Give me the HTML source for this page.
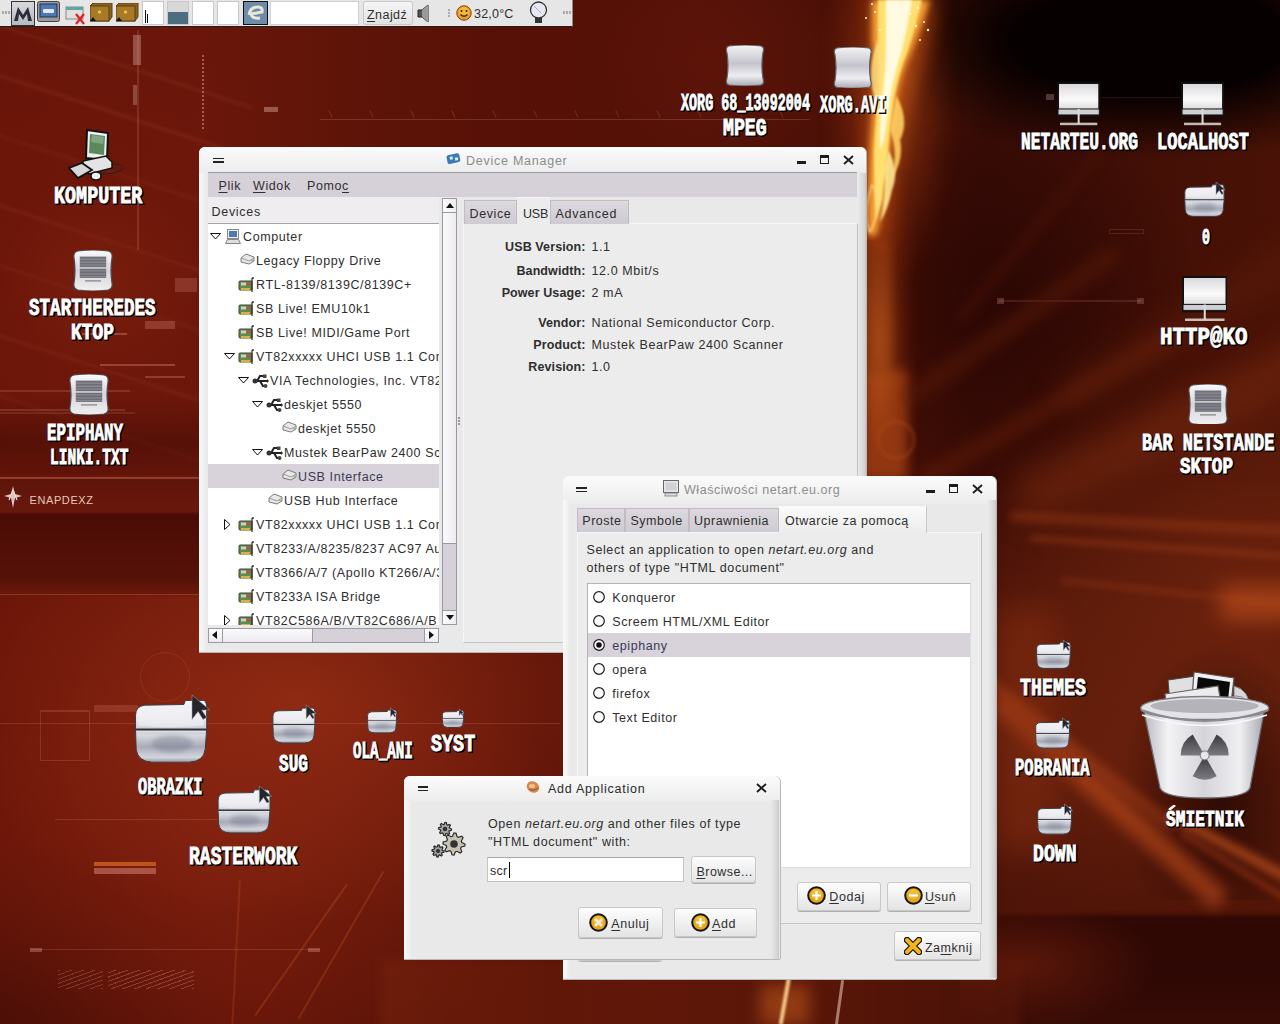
<!DOCTYPE html>
<html><head><meta charset="utf-8">
<style>
*{box-sizing:border-box;margin:0;padding:0}
html,body{width:1280px;height:1024px;overflow:hidden}
body{position:relative;font-family:"Liberation Sans",sans-serif;font-size:12.5px;color:#1e1e1e;background:#5a1208}
.a{position:absolute}
.t{position:absolute;white-space:nowrap}
.win{position:absolute;background:#e9e9e9;border-radius:6px 6px 0 0;box-shadow:0 1px 0 #b4b8bc,1px 0 0 #b8b8b8;overflow:hidden}
.tbar{position:absolute;left:0;top:0;right:0;height:24px;background:linear-gradient(#fbfbfb,#ececec)}
.btn{position:absolute;border:1px solid #c4c4c4;border-radius:3px;background:linear-gradient(#fbfbfb,#e6e6e6);box-shadow:0 1px 0 #b8b8b8}
.u{text-decoration:underline;text-underline-offset:2px}
</style></head><body>

<div class="a" id="bg" style="left:0;top:0;width:1280px;height:1024px;overflow:hidden;background:#4a0e06">
<div class="a" style="left:0px;top:0px;width:1280px;height:1024px;opacity:1;background:radial-gradient(300px 120px at 1150px 40px,rgba(6,0,0,1) 45%,rgba(6,0,0,0) 100%),radial-gradient(60px 80px at 960px 60px,rgba(90,24,8,.6) 0%,rgba(90,24,8,0) 100%),radial-gradient(120px 100px at 720px 60px,rgba(100,22,10,.5) 0%,rgba(100,22,10,0) 100%),radial-gradient(200px 200px at 1000px 300px,rgba(40,6,3,.8) 0%,rgba(40,6,3,0) 100%),radial-gradient(300px 260px at 1250px 620px,rgba(150,56,22,.55) 0%,rgba(150,56,22,0) 100%),radial-gradient(260px 180px at 1100px 760px,rgba(130,44,18,.5) 0%,rgba(130,44,18,0) 100%),radial-gradient(380px 220px at 300px 700px,rgba(156,48,22,.75) 0%,rgba(156,48,22,0) 100%),radial-gradient(340px 200px at 250px 860px,rgba(136,36,16,.6) 0%,rgba(136,36,16,0) 100%),radial-gradient(260px 180px at 0px 1024px,rgba(70,14,6,.8) 0%,rgba(70,14,6,0) 100%),radial-gradient(260px 300px at 80px 300px,rgba(116,26,12,.6) 0%,rgba(116,26,12,0) 100%),linear-gradient(90deg,#681408 0px,#6a160a 200px,#5e1408 360px,#561006 540px,#561208 700px,#4a1006 860px,#3a0c06 980px,#4a1206 1280px);"></div>
<div class="a" style="left:-40px;top:60px;width:300px;height:3px;filter:blur(1.5px);transform:rotate(18deg);opacity:1;background:rgba(220,110,80,0.1);"></div>
<div class="a" style="left:-40px;top:110px;width:300px;height:3px;filter:blur(1.5px);transform:rotate(18deg);opacity:1;background:rgba(220,110,80,0.12);"></div>
<div class="a" style="left:-40px;top:170px;width:300px;height:3px;filter:blur(1.5px);transform:rotate(18deg);opacity:1;background:rgba(220,110,80,0.08);"></div>
<div class="a" style="left:-40px;top:240px;width:300px;height:3px;filter:blur(1.5px);transform:rotate(18deg);opacity:1;background:rgba(220,110,80,0.1);"></div>
<div class="a" style="left:-40px;top:300px;width:300px;height:3px;filter:blur(1.5px);transform:rotate(18deg);opacity:1;background:rgba(220,110,80,0.07);"></div>
<div class="a" style="left:-40px;top:370px;width:300px;height:3px;filter:blur(1.5px);transform:rotate(18deg);opacity:1;background:rgba(220,110,80,0.09);"></div>
<div class="a" style="left:-40px;top:430px;width:300px;height:3px;filter:blur(1.5px);transform:rotate(18deg);opacity:1;background:rgba(220,110,80,0.08);"></div>
<div class="a" style="left:0px;top:180px;width:205px;height:200px;opacity:1;background:radial-gradient(ellipse at 50% 50%,rgba(130,36,16,.45),rgba(130,36,16,0) 70%);"></div>
<div class="a" style="left:0px;top:395px;width:205px;height:80px;opacity:1;background:linear-gradient(rgba(60,10,4,0),rgba(60,10,4,.45) 60%,rgba(60,10,4,.2));"></div>
<div class="a" style="left:82px;top:333px;width:45px;height:2px;opacity:1;background:rgba(230,150,130,.35);"></div>
<div class="a" style="left:100px;top:364px;width:75px;height:2px;opacity:1;background:rgba(230,150,130,.35);"></div>
<div class="a" style="left:145px;top:376px;width:40px;height:2px;opacity:1;background:rgba(230,150,130,.3);"></div>
<div class="a" style="left:0px;top:390px;width:130px;height:1.5px;opacity:1;background:rgba(230,150,130,.2);"></div>
<div class="a" style="left:0px;top:409px;width:125px;height:1.5px;opacity:1;background:rgba(230,150,130,.2);"></div>
<div class="a" style="left:0px;top:412px;width:135px;height:1.5px;opacity:1;background:rgba(230,150,130,.15);"></div>
<div class="a" style="left:175px;top:278px;width:22px;height:14px;opacity:1;background:rgba(220,140,130,.25);"></div>
<div class="a" style="left:145px;top:321px;width:30px;height:8px;opacity:1;background:rgba(220,140,130,.3);"></div>
<div class="a" style="left:-10px;top:478px;width:215px;height:36px;filter:blur(0.6px);opacity:1;background:linear-gradient(#5e140a,#6a180c);"></div>
<div class="a" style="left:-10px;top:477px;width:215px;height:1.5px;opacity:1;background:rgba(200,110,90,.45);"></div>
<div class="a" style="left:-10px;top:513px;width:215px;height:82px;filter:blur(1px);opacity:1;background:linear-gradient(#4a0c06,#561208 80%,#6a1a0a);"></div>
<div class="a" style="left:0px;top:594px;width:205px;height:1px;opacity:1;background:rgba(200,110,90,.35);"></div>
<div class="a" style="left:320px;top:119px;width:490px;height:1px;opacity:1;background:rgba(230,170,160,0.2);"></div>
<div class="a" style="left:330px;top:110px;width:1px;height:8px;transform:rotate(-25deg);opacity:1;background:rgba(230,170,160,0.2);"></div>
<div class="a" style="left:371px;top:110px;width:1px;height:8px;transform:rotate(-25deg);opacity:1;background:rgba(230,170,160,0.2);"></div>
<div class="a" style="left:412px;top:110px;width:1px;height:8px;transform:rotate(-25deg);opacity:1;background:rgba(230,170,160,0.2);"></div>
<div class="a" style="left:453px;top:110px;width:1px;height:8px;transform:rotate(-25deg);opacity:1;background:rgba(230,170,160,0.2);"></div>
<div class="a" style="left:494px;top:110px;width:1px;height:8px;transform:rotate(-25deg);opacity:1;background:rgba(230,170,160,0.2);"></div>
<div class="a" style="left:535px;top:110px;width:1px;height:8px;transform:rotate(-25deg);opacity:1;background:rgba(230,170,160,0.2);"></div>
<div class="a" style="left:576px;top:110px;width:1px;height:8px;transform:rotate(-25deg);opacity:1;background:rgba(230,170,160,0.2);"></div>
<div class="a" style="left:617px;top:110px;width:1px;height:8px;transform:rotate(-25deg);opacity:1;background:rgba(230,170,160,0.2);"></div>
<div class="a" style="left:658px;top:110px;width:1px;height:8px;transform:rotate(-25deg);opacity:1;background:rgba(230,170,160,0.2);"></div>
<div class="a" style="left:699px;top:110px;width:1px;height:8px;transform:rotate(-25deg);opacity:1;background:rgba(230,170,160,0.2);"></div>
<div class="a" style="left:740px;top:110px;width:1px;height:8px;transform:rotate(-25deg);opacity:1;background:rgba(230,170,160,0.2);"></div>
<div class="a" style="left:781px;top:110px;width:1px;height:8px;transform:rotate(-25deg);opacity:1;background:rgba(230,170,160,0.2);"></div>
<div class="a" style="left:137px;top:30px;width:1.5px;height:220px;opacity:1;background:rgba(220,140,120,0.2);"></div>
<div class="a" style="left:202px;top:55px;width:2px;height:75px;opacity:0.5;background:repeating-linear-gradient(#d8a8a0 0 2px,rgba(0,0,0,0) 2px 4px);"></div>
<div class="a" style="left:133px;top:35px;width:8px;height:30px;opacity:1;background:rgba(230,190,180,.35);"></div>
<div class="a" style="left:133px;top:85px;width:4px;height:20px;opacity:1;background:rgba(230,190,180,.3);"></div>
<div class="a" style="left:264px;top:107px;width:14px;height:5px;opacity:1;background:rgba(230,190,180,.4);"></div>
<div class="a" style="left:0px;top:723px;width:560px;height:1px;opacity:1;background:rgba(230,150,130,0.2);"></div>
<div class="a" style="left:40px;top:710px;width:50px;height:1px;opacity:1;background:rgba(230,150,130,0.2);"></div>
<div class="a" style="left:40px;top:711px;width:50px;height:50px;opacity:1;border:1px solid rgba(230,150,130,0.2);background:none;"></div>
<div class="a" style="left:140px;top:652px;width:50px;height:50px;opacity:1;border:1px solid rgba(230,150,130,0.13);border-radius:50%;background:none;"></div>
<div class="a" style="left:55px;top:819px;width:200px;height:1px;opacity:1;background:rgba(230,150,130,0.2);"></div>
<div class="a" style="left:30px;top:949px;width:290px;height:1px;opacity:1;background:rgba(230,150,130,0.2);"></div>
<div class="a" style="left:30px;top:948px;width:12px;height:4px;opacity:1;background:rgba(230,160,150,.35);"></div>
<div class="a" style="left:308px;top:948px;width:12px;height:4px;opacity:1;background:rgba(230,160,150,.35);"></div>
<div class="a" style="left:94px;top:862px;width:62px;height:4px;opacity:1;background:rgba(220,110,30,.7);"></div>
<div class="a" style="left:94px;top:868px;width:62px;height:6px;opacity:1;background:rgba(230,150,140,.45);"></div>
<div class="a" style="left:58px;top:970px;width:45px;height:19px;opacity:1;background:repeating-linear-gradient(-20deg,rgba(230,150,140,.25) 0 1px,rgba(0,0,0,0) 1px 4px);"></div>
<div class="a" style="left:108px;top:970px;width:86px;height:19px;opacity:1;background:repeating-linear-gradient(-20deg,rgba(230,150,140,.3) 0 1px,rgba(0,0,0,0) 1px 4px);"></div>
<div class="a" style="left:300px;top:870px;width:2px;height:160px;filter:blur(0.5px);transform:rotate(35deg);opacity:1;background:rgba(210,90,40,.28);"></div>
<div class="a" style="left:340px;top:860px;width:2px;height:170px;filter:blur(0.5px);transform:rotate(30deg);opacity:1;background:rgba(210,90,40,.25);"></div>
<div class="a" style="left:235px;top:880px;width:2px;height:150px;filter:blur(0.5px);transform:rotate(3deg);opacity:1;background:rgba(210,90,40,.22);"></div>
<div class="a" style="left:94px;top:705px;width:44px;height:7px;opacity:1;background:rgba(230,150,130,0.2);"></div>
<div class="a" style="left:1046px;top:94px;width:8px;height:6px;opacity:1;background:rgba(200,150,150,.35);"></div>
<div class="a" style="left:1102px;top:97px;width:78px;height:1px;opacity:1;background:rgba(60,30,30,.6);"></div>
<div class="a" style="left:1109px;top:229px;width:35px;height:5px;opacity:1;border:1px solid rgba(200,120,110,.2);background:none;"></div>
<div class="a" style="left:999px;top:300px;width:142px;height:1.5px;opacity:1;background:rgba(200,120,110,.18);"></div>
<div class="a" style="left:997px;top:298px;width:7px;height:6px;opacity:1;background:rgba(200,140,130,.3);"></div>
<div class="a" style="left:1137px;top:298px;width:7px;height:6px;opacity:1;background:rgba(200,140,130,.3);"></div>
<svg class="a" style="left:1232.0px;top:968.0px;" width="26" height="30" viewBox="0 0 26 30"><path d="M13 1 L13 29 M9 29 L17 29 M6 18 Q13 26 20 18 M8 12 L18 12 M10 7 L16 7" stroke="rgba(220,200,200,.45)" stroke-width="1.5" fill="none"/></svg>
<div class="a" style="left:996px;top:480px;width:300px;height:440px;filter:blur(6px);opacity:1;background:linear-gradient(180deg,rgba(90,26,10,0) 0%,rgba(100,30,12,.6) 30%,rgba(100,30,12,.6) 60%,rgba(90,26,10,.5) 100%);"></div>
<div class="a" style="left:1120px;top:640px;width:200px;height:260px;opacity:1;background:radial-gradient(ellipse at 50% 60%,rgba(30,4,2,.75),rgba(30,4,2,0) 70%);"></div>
<div class="a" style="left:996px;top:915px;width:300px;height:120px;filter:blur(2px);opacity:1;background:linear-gradient(#300804,#2e0804 50%,#3a0c06);"></div>
<div class="a" style="left:960px;top:900px;width:200px;height:130px;opacity:1;background:radial-gradient(ellipse at 30% 50%,rgba(110,30,12,.7),rgba(110,30,12,0) 70%);"></div>
<div class="a" style="left:1000px;top:395px;width:380px;height:46px;filter:blur(16px);transform:rotate(-26deg);opacity:0.55;background:#7a2a0e;"></div>
<div class="a" style="left:1040px;top:300px;width:320px;height:34px;filter:blur(14px);transform:rotate(-32deg);opacity:0.5;background:#5e1e0a;"></div>
<div class="a" style="left:1010px;top:520px;width:300px;height:8px;filter:blur(4px);transform:rotate(3deg);opacity:0.5;background:#a04018;"></div>
<div class="a" style="left:1030px;top:545px;width:280px;height:6px;filter:blur(3px);transform:rotate(4deg);opacity:0.45;background:#a04018;"></div>
<div class="a" style="left:1060px;top:590px;width:240px;height:6px;filter:blur(3px);transform:rotate(6deg);opacity:0.35;background:#a04018;"></div>
<div class="a" style="left:1220px;top:585px;width:100px;height:36px;filter:blur(10px);opacity:0.6;background:#c0501c;"></div>
<div class="a" style="left:960px;top:790px;width:300px;height:22px;filter:blur(7px);transform:rotate(42deg);opacity:0.65;background:#b8481a;"></div>
<div class="a" style="left:940px;top:740px;width:260px;height:12px;filter:blur(5px);transform:rotate(38deg);opacity:0.5;background:#a8401a;"></div>
<div class="a" style="left:1160px;top:850px;width:170px;height:10px;filter:blur(4px);transform:rotate(28deg);opacity:0.75;background:#c0501c;"></div>
<div class="a" style="left:1170px;top:870px;width:150px;height:6px;filter:blur(3px);transform:rotate(32deg);opacity:0.5;background:#b0401a;"></div>
<div class="a" style="left:996px;top:610px;width:60px;height:240px;filter:blur(14px);opacity:0.45;background:#8a3010;"></div>
<div class="a" style="left:380px;top:960px;width:640px;height:80px;filter:blur(4px);opacity:1;background:linear-gradient(90deg,rgba(120,36,14,.5),rgba(100,28,10,.55) 50%,rgba(90,24,10,.5));"></div>
<div class="a" style="left:760px;top:985px;width:50px;height:40px;filter:blur(8px);opacity:0.5;background:#c86020;"></div>
<div class="a" style="left:783px;top:975px;width:4px;height:50px;filter:blur(1px);transform:rotate(10deg);opacity:0.9;background:#ffd890;"></div>
<div class="a" style="left:838px;top:980px;width:3px;height:45px;filter:blur(0.5px);transform:rotate(8deg);opacity:0.6;background:#e0c0b0;"></div>
<div class="a" style="left:862px;top:240px;width:30px;height:130px;filter:blur(5px);opacity:0.6;background:#8a3812;"></div>
<div class="a" style="left:862px;top:370px;width:45px;height:110px;filter:blur(6px);opacity:0.7;background:#b04a18;"></div>
<div class="a" style="left:876px;top:420px;width:40px;height:40px;filter:blur(1.5px);opacity:1;border:4px solid rgba(200,90,30,.25);border-radius:50%;background:none;"></div>
<div class="a" style="left:880px;top:320px;width:260px;height:14px;filter:blur(8px);transform:rotate(-35deg);opacity:0.7;background:#5a1a08;"></div>
<div class="a" style="left:900px;top:400px;width:300px;height:14px;filter:blur(8px);transform:rotate(-30deg);opacity:0.6;background:#6a2008;"></div>
<div class="a" style="left:920px;top:230px;width:220px;height:10px;filter:blur(6px);transform:rotate(-50deg);opacity:0.6;background:#4a1206;"></div>
<div class="a" style="left:830px;top:-40px;width:120px;height:320px;filter:blur(8px);opacity:1;background:radial-gradient(ellipse at 50% 40%,rgba(255,140,40,.45) 0%,rgba(210,80,20,.25) 40%,rgba(120,30,5,0) 75%);"></div>
<div class="a" style="left:850px;top:180px;width:60px;height:320px;filter:blur(6px);opacity:1;background:radial-gradient(ellipse at 50% 50%,rgba(210,100,30,.6) 0%,rgba(150,50,10,.3) 50%,rgba(90,20,5,0) 100%);"></div>
</div>
<svg class="a" style="left:800.0px;top:0.0px;overflow:visible" width="180" height="480" viewBox="0 0 180 480"><defs><filter id="fb" x="-50%" y="-50%" width="200%" height="200%"><feGaussianBlur stdDeviation="9"/></filter><filter id="fb1" x="-50%" y="-50%" width="200%" height="200%"><feGaussianBlur stdDeviation="3"/></filter><filter id="fb2" x="-50%" y="-50%" width="200%" height="200%"><feGaussianBlur stdDeviation="1.2"/></filter></defs>
<path d="M70 0 L135 0 Q125 60 105 110 Q92 160 88 240 L66 240 Q62 170 72 110 Q80 60 70 0Z" fill="#d85a18" filter="url(#fb)" opacity=".55"/>
<path d="M72 0 L130 0 Q122 25 112 50 Q100 75 96 100 Q92 125 90 150 Q86 180 84 200 L76 236 L68 236 Q68 200 70 150 Q72 120 74 100 Q76 70 72 40Z" fill="#ffa838" filter="url(#fb1)" opacity=".95"/>
<path d="M78 0 L122 0 Q116 25 108 50 Q98 75 94 100 Q90 125 88 150 Q84 180 82 200 L76 220 Q74 190 74 150 Q76 120 78 100 Q80 70 78 40Z" fill="#ffe070" filter="url(#fb2)"/>
<path d="M86 0 L112 0 Q108 25 102 50 Q94 75 90 100 Q86 125 84 140 L80 150 Q80 120 82 100 Q86 70 86 40Z" fill="#fffae0" filter="url(#fb2)"/>
<path d="M96 95 Q110 120 100 140 Q104 160 92 178 Q98 150 90 130Z" fill="#ffd060" filter="url(#fb2)" opacity=".9"/>
<path d="M78 40 Q66 70 74 95 Q72 110 80 120 Q78 90 84 70Z" fill="#ffe080" filter="url(#fb2)" opacity=".8"/>
<path d="M88 150 Q100 170 92 190 Q88 210 80 222 Q86 195 84 170Z" fill="#ffe890" filter="url(#fb2)" opacity=".9"/>
<path d="M72 185 Q62 215 70 232 Q80 215 76 190Z" fill="none" stroke="#ffe0a0" stroke-width="1.2" filter="url(#fb2)" opacity=".9"/>
<g fill="#fff4d0"><circle cx="110" cy="14" r="1.2"/><circle cx="116" cy="26" r="1.3"/><circle cx="106" cy="4" r="1"/><circle cx="72" cy="4" r="1"/><circle cx="66" cy="18" r="1"/><circle cx="118" cy="8" r="1.2"/><circle cx="124" cy="22" r="1"/><circle cx="128" cy="30" r="1.2"/><circle cx="75" cy="12" r="1"/><circle cx="80" cy="30" r="1"/><circle cx="120" cy="40" r="1"/></g></svg>
<div class="a" style="left:0.0px;top:0.0px;width:573.0px;height:27.0px;background:#e6e6e6;border-bottom:1px solid #1e1e1e;border-right:1px solid #8a8a8a"></div>
<div class="a" style="left:2.0px;top:11.0px;width:1.5px;height:3.0px;background:#aaa"></div>
<div class="a" style="left:5.0px;top:11.0px;width:1.5px;height:3.0px;background:#aaa"></div>
<div class="a" style="left:8.0px;top:11.0px;width:1.5px;height:3.0px;background:#aaa"></div>
<div class="a" style="left:11.0px;top:1.0px;width:24.0px;height:25.0px;background:linear-gradient(#d8d8dc,#b8b8c0);border:1px solid #333"></div>
<svg class="a" style="left:13.0px;top:5.0px;" width="20" height="17" viewBox="0 0 20 17"><path d="M1 16 L5 2 L10 10 L15 2 L19 16 L15 16 L14 9 L10 15 L6 9 L5 16Z" fill="#2a2e3a"/></svg>
<svg class="a" style="left:37.0px;top:1.0px;" width="24" height="22" viewBox="0 0 24 22"><rect x="0.5" y="0.5" width="22" height="20" rx="2" fill="#9a9a9a" stroke="#444"/><rect x="3" y="3" width="17" height="13" fill="#4a78b8" stroke="#234"/><rect x="6" y="8" width="11" height="4" rx="1" fill="#e8e8e8"/></svg>
<svg class="a" style="left:64.0px;top:4.0px;" width="24" height="21" viewBox="0 0 24 21"><rect x="2" y="3" width="17" height="12" fill="#e0e0e0" stroke="#888"/><rect x="2" y="3" width="17" height="3" fill="#5aa8a0"/><path d="M12 10 L20 20 M20 10 L12 20" stroke="#e02020" stroke-width="2.2"/></svg>
<svg class="a" style="left:90.0px;top:3.0px;" width="23" height="20" viewBox="0 0 23 20"><path d="M3 0 L22 0 L22 14 L19 18 L0 18 L0 3Z" fill="#8a6420" stroke="#5a3e10"/><rect x="0" y="3" width="19" height="15" fill="#a87a28" stroke="#5a3e10"/><circle cx="9.5" cy="9" r="1.6" fill="#f4d040"/><path d="M0 18 L3 14 L6 18Z" fill="#111"/></svg>
<svg class="a" style="left:116.0px;top:3.0px;" width="23" height="20" viewBox="0 0 23 20"><path d="M3 0 L22 0 L22 14 L19 18 L0 18 L0 3Z" fill="#8a6420" stroke="#5a3e10"/><rect x="0" y="3" width="19" height="15" fill="#a87a28" stroke="#5a3e10"/><circle cx="9.5" cy="9" r="1.6" fill="#f4d040"/><path d="M0 18 L3 14 L6 18Z" fill="#111"/></svg>
<div class="a" style="left:142.0px;top:1.0px;width:22.0px;height:24.0px;background:#fff;border:1px solid #c8c8c8"></div>
<div class="a" style="left:145.0px;top:10.0px;width:1.0px;height:13.0px;background:#111"></div>
<div class="a" style="left:147.0px;top:14.0px;width:1.0px;height:9.0px;background:#111"></div>
<div class="a" style="left:167.0px;top:1.0px;width:22.0px;height:24.0px;background:linear-gradient(#d8d8d8 0,#d8d8d8 45%,#4c6e80 45%);border:1px solid #c8c8c8"></div>
<div class="a" style="left:192.0px;top:1.0px;width:22.0px;height:24.0px;background:#fff;border:1px solid #c8c8c8"></div>
<div class="a" style="left:217.0px;top:1.0px;width:22.0px;height:24.0px;background:#fff;border:1px solid #c8c8c8"></div>
<svg class="a" style="left:243.0px;top:1.0px;" width="25" height="24" viewBox="0 0 25 24"><rect x="0.5" y="0.5" width="24" height="23" fill="#6c8ca8" stroke="#111"/><path d="M6 14 Q7 6 15 6 Q20 6 19 11 L8 13 Q9 18 17 17" fill="none" stroke="#eae6da" stroke-width="3"/></svg>
<div class="a" style="left:270.0px;top:1.0px;width:89.0px;height:24.0px;background:#fff;border:1px solid #d0d0d0"></div>
<div class="a" style="left:362.5px;top:1.0px;width:50.0px;height:24.0px;background:linear-gradient(#f6f6f6,#e2e2e2);border:1px solid #c8c8c8;border-radius:3px"></div>
<div class="t" style="left:367.0px;top:7.7px;font-size:12.5px;line-height:15.0px;color:#2e2e2e;letter-spacing:0.45px;font-weight:normal;font-style:normal;"><span class="u">Z</span>najdź</div>
<svg class="a" style="left:417.0px;top:4.0px;" width="15" height="19" viewBox="0 0 15 19"><path d="M1 6 L5 6 L11 1 L11 18 L5 13 L1 13Z" fill="#555" stroke="#222"/><path d="M5 6 L11 1 L11 18 L5 13Z" fill="#9a9a9a"/></svg>
<div class="a" style="left:448.0px;top:9.0px;width:2.0px;height:1.5px;background:#aaa"></div>
<div class="a" style="left:448.0px;top:12.0px;width:2.0px;height:1.5px;background:#aaa"></div>
<div class="a" style="left:448.0px;top:15.0px;width:2.0px;height:1.5px;background:#aaa"></div>
<svg class="a" style="left:456.0px;top:5.0px;" width="16" height="16" viewBox="0 0 16 16"><circle cx="8" cy="8" r="7.2" fill="#f0a020" stroke="#8a3a00"/><circle cx="8" cy="7" r="5" fill="#f8c040" opacity=".7"/><circle cx="5.5" cy="6" r="1" fill="#222"/><circle cx="10.5" cy="6" r="1" fill="#222"/><path d="M4.5 9.5 Q8 13 11.5 9.5" stroke="#222" fill="none" stroke-width="1.2"/></svg>
<div class="t" style="left:474.0px;top:7.2px;font-size:12.5px;line-height:15.0px;color:#2e2e2e;letter-spacing:0.2px;font-weight:normal;font-style:normal;">32,0°C</div>
<svg class="a" style="left:529.0px;top:1.0px;" width="20" height="24" viewBox="0 0 20 24"><circle cx="9.5" cy="9" r="8" fill="#e8e8f4" stroke="#333" stroke-width="1.3"/><path d="M5 5 L12 12" stroke="#aab" /><rect x="6" y="17" width="7" height="5" fill="#333"/></svg>
<div class="a" style="left:563.0px;top:11.0px;width:1.5px;height:3.0px;background:#aaa"></div>
<div class="a" style="left:566.0px;top:11.0px;width:1.5px;height:3.0px;background:#aaa"></div>
<div class="a" style="left:569.0px;top:11.0px;width:1.5px;height:3.0px;background:#aaa"></div>
<svg width="0" height="0" style="position:absolute"><defs>
<linearGradient id="gs" x1="0" y1="0" x2="0" y2="1"><stop offset="0" stop-color="#f4f4f6"/><stop offset=".45" stop-color="#c4c4cc"/><stop offset=".75" stop-color="#eeeef2"/><stop offset="1" stop-color="#a8a8b0"/></linearGradient>
<linearGradient id="gs2" x1="0" y1="0" x2="0" y2="1"><stop offset="0" stop-color="#fafafa"/><stop offset=".5" stop-color="#d6d6dc"/><stop offset="1" stop-color="#f0f0f2"/></linearGradient>
<linearGradient id="gpot" x1="0" y1="0" x2="0" y2="1"><stop offset="0" stop-color="#f6f6f8"/><stop offset=".35" stop-color="#d8d8de"/><stop offset=".5" stop-color="#8a8a94"/><stop offset=".56" stop-color="#e8e8ec"/><stop offset=".8" stop-color="#a4a4ae"/><stop offset="1" stop-color="#e4e4e8"/></linearGradient>
<linearGradient id="gmon" x1="0" y1="0" x2="0" y2="1"><stop offset="0" stop-color="#d8d8dc"/><stop offset=".5" stop-color="#fafafa"/><stop offset="1" stop-color="#c8c8cc"/></linearGradient>
<linearGradient id="gpot2" x1="0" y1="0" x2="0" y2="1"><stop offset="0" stop-color="#f8f8fa"/><stop offset=".3" stop-color="#e4e4ea"/><stop offset=".5" stop-color="#c8cad2"/><stop offset=".56" stop-color="#d8dae0"/><stop offset=".75" stop-color="#a8abb8"/><stop offset=".92" stop-color="#d4d6de"/><stop offset="1" stop-color="#9a9ca6"/></linearGradient>
<filter id="pb" x="-50%" y="-50%" width="200%" height="200%"><feGaussianBlur stdDeviation="2"/></filter>
</defs></svg>
<svg class="a" style="left:66.0px;top:128.0px;" width="64" height="54" viewBox="0 0 64 54"><path d="M21 2 L42 5 L41 32 L20 30Z" fill="#f0f0f0" stroke="#111" stroke-width="2"/><path d="M24 6 L39 8 L38 27 L23 25Z" fill="#5a8a5c"/><path d="M26 7 L38 9 L37 16 L25 14Z" fill="#9aba9a" opacity=".6"/><path d="M17 33 L40 28 L46 34 L46 40 L23 46 L17 40Z" fill="#e4e4e4" stroke="#111" stroke-width="1.5"/><path d="M3 40 L16 35 L26 42 L12 50Z" fill="#d8d8d8" stroke="#111" stroke-width="1.8"/><ellipse cx="30" cy="48" rx="5" ry="4" fill="#eee" stroke="#111" stroke-width="1.5"/><path d="M46 36 Q60 36 56 42 Q48 46 40 46 Q34 46 33 44" fill="none" stroke="#222" stroke-width="1"/></svg>
<svg class="a" style="left:52.0px;top:182.8px;overflow:visible" width="94.4" height="23.7"><text x="2" y="19.7" font-family="Liberation Mono" font-weight="bold" font-size="23.8" textLength="88.4" lengthAdjust="spacingAndGlyphs" fill="#000" transform="translate(1,1)" stroke="#000" stroke-width="2">KOMPUTER</text><text x="2" y="19.7" font-family="Liberation Mono" font-weight="bold" font-size="23.8" textLength="88.4" lengthAdjust="spacingAndGlyphs" fill="#fff" stroke="#fff" stroke-width="0.9">KOMPUTER</text></svg>
<svg class="a" style="left:73.0px;top:249.6px;" width="40" height="41.00000000000003" viewBox="0 0 40 41.00000000000003"><path d="M5 1 Q20.0 -1 35 1 Q40 2 39 8 Q37 20.500000000000014 39 33.00000000000003 Q40 39.00000000000003 35 40.00000000000003 Q20.0 42.00000000000003 5 40.00000000000003 Q0 39.00000000000003 1 33.00000000000003 Q3 20.500000000000014 1 8 Q0 2 5 1Z" fill="url(#gs2)" stroke="#4a4a52" stroke-width="1.2"/><rect x="6.8" y="6.6" width="26.4" height="1.5" fill="#5a5a64" opacity=".85"/><rect x="6.8" y="8.1" width="26.4" height="1.5" fill="#5a5a64" opacity=".85"/><rect x="6.8" y="9.6" width="26.4" height="1.5" fill="#5a5a64" opacity=".85"/><rect x="6.8" y="11.1" width="26.4" height="1.5" fill="#5a5a64" opacity=".85"/><rect x="6.8" y="12.7" width="26.4" height="1.5" fill="#5a5a64" opacity=".85"/><rect x="6.8" y="14.2" width="26.4" height="1.5" fill="#5a5a64" opacity=".85"/><rect x="6.8" y="15.7" width="26.4" height="1.5" fill="#5a5a64" opacity=".85"/><rect x="6.8" y="18.7" width="26.4" height="1.5" fill="#5a5a64" opacity=".85"/><rect x="6.8" y="20.3" width="26.4" height="1.5" fill="#5a5a64" opacity=".85"/><rect x="6.8" y="21.8" width="26.4" height="1.5" fill="#5a5a64" opacity=".85"/><rect x="6.8" y="23.3" width="26.4" height="1.5" fill="#5a5a64" opacity=".85"/><rect x="6.8" y="24.8" width="26.4" height="1.5" fill="#5a5a64" opacity=".85"/><rect x="6.8" y="26.4" width="26.4" height="1.5" fill="#5a5a64" opacity=".85"/><rect x="12.0" y="30.3" width="16.0" height="1.2" fill="#555" opacity=".7"/></svg>
<svg class="a" style="left:26.8px;top:294.8px;overflow:visible" width="132.6" height="23.6"><text x="2" y="19.6" font-family="Liberation Mono" font-weight="bold" font-size="23.6" textLength="126.6" lengthAdjust="spacingAndGlyphs" fill="#000" transform="translate(1,1)" stroke="#000" stroke-width="2">STARTHEREDES</text><text x="2" y="19.6" font-family="Liberation Mono" font-weight="bold" font-size="23.6" textLength="126.6" lengthAdjust="spacingAndGlyphs" fill="#fff" stroke="#fff" stroke-width="0.9">STARTHEREDES</text></svg>
<svg class="a" style="left:68.6px;top:320.2px;overflow:visible" width="48.9" height="22.8"><text x="2" y="18.8" font-family="Liberation Mono" font-weight="bold" font-size="22.4" textLength="42.9" lengthAdjust="spacingAndGlyphs" fill="#000" transform="translate(1,1)" stroke="#000" stroke-width="2">KTOP</text><text x="2" y="18.8" font-family="Liberation Mono" font-weight="bold" font-size="22.4" textLength="42.9" lengthAdjust="spacingAndGlyphs" fill="#fff" stroke="#fff" stroke-width="0.9">KTOP</text></svg>
<svg class="a" style="left:69.0px;top:374.0px;" width="40" height="41" viewBox="0 0 40 41"><path d="M5 1 Q20.0 -1 35 1 Q40 2 39 8 Q37 20.5 39 33 Q40 39 35 40 Q20.0 42 5 40 Q0 39 1 33 Q3 20.5 1 8 Q0 2 5 1Z" fill="url(#gs2)" stroke="#4a4a52" stroke-width="1.2"/><rect x="6.8" y="6.6" width="26.4" height="1.5" fill="#5a5a64" opacity=".85"/><rect x="6.8" y="8.1" width="26.4" height="1.5" fill="#5a5a64" opacity=".85"/><rect x="6.8" y="9.6" width="26.4" height="1.5" fill="#5a5a64" opacity=".85"/><rect x="6.8" y="11.1" width="26.4" height="1.5" fill="#5a5a64" opacity=".85"/><rect x="6.8" y="12.7" width="26.4" height="1.5" fill="#5a5a64" opacity=".85"/><rect x="6.8" y="14.2" width="26.4" height="1.5" fill="#5a5a64" opacity=".85"/><rect x="6.8" y="15.7" width="26.4" height="1.5" fill="#5a5a64" opacity=".85"/><rect x="6.8" y="18.7" width="26.4" height="1.5" fill="#5a5a64" opacity=".85"/><rect x="6.8" y="20.3" width="26.4" height="1.5" fill="#5a5a64" opacity=".85"/><rect x="6.8" y="21.8" width="26.4" height="1.5" fill="#5a5a64" opacity=".85"/><rect x="6.8" y="23.3" width="26.4" height="1.5" fill="#5a5a64" opacity=".85"/><rect x="6.8" y="24.8" width="26.4" height="1.5" fill="#5a5a64" opacity=".85"/><rect x="6.8" y="26.4" width="26.4" height="1.5" fill="#5a5a64" opacity=".85"/><rect x="12.0" y="30.3" width="16.0" height="1.2" fill="#555" opacity=".7"/></svg>
<svg class="a" style="left:45.3px;top:419.8px;overflow:visible" width="82.1" height="23.8"><text x="2" y="19.8" font-family="Liberation Mono" font-weight="bold" font-size="23.9" textLength="76.1" lengthAdjust="spacingAndGlyphs" fill="#000" transform="translate(1,1)" stroke="#000" stroke-width="2">EPIPHANY</text><text x="2" y="19.8" font-family="Liberation Mono" font-weight="bold" font-size="23.9" textLength="76.1" lengthAdjust="spacingAndGlyphs" fill="#fff" stroke="#fff" stroke-width="0.9">EPIPHANY</text></svg>
<svg class="a" style="left:47.5px;top:445.2px;overflow:visible" width="84.5" height="23.0"><text x="2" y="19.0" font-family="Liberation Mono" font-weight="bold" font-size="22.7" textLength="78.5" lengthAdjust="spacingAndGlyphs" fill="#000" transform="translate(1,1)" stroke="#000" stroke-width="2">LINKI.TXT</text><text x="2" y="19.0" font-family="Liberation Mono" font-weight="bold" font-size="22.7" textLength="78.5" lengthAdjust="spacingAndGlyphs" fill="#fff" stroke="#fff" stroke-width="0.9">LINKI.TXT</text></svg>
<svg class="a" style="left:2.0px;top:485.0px;" width="22" height="24" viewBox="0 0 22 24"><path d="M11 1 L13 9 L20 11 L13 13 L11 23 L9 13 L2 11 L9 9Z" fill="#e8d8d0" opacity=".9"/><path d="M11 5 L15 15 M11 5 L7 15" stroke="#e8d8d0" stroke-width="1.2"/></svg>
<div class="t" style="left:29.5px;top:493.6px;font-size:11px;line-height:13.2px;color:#e8c8b8;letter-spacing:0.6px;font-weight:normal;font-style:normal;">ENAPDEXZ</div>
<svg class="a" style="left:725.3px;top:44.7px;" width="39.90000000000009" height="41.0" viewBox="0 0 39.90000000000009 41.0"><path d="M4 1 Q19.950000000000045 -1 35.90000000000009 1 Q39.90000000000009 2 37.90000000000009 8 Q35.90000000000009 20.5 37.90000000000009 33.0 Q39.90000000000009 39.0 35.90000000000009 40.0 Q19.950000000000045 42.0 4 40.0 Q0 39.0 2 33.0 Q4 20.5 2 8 Q0 2 4 1Z" fill="url(#gs)" stroke="#606068" stroke-width="1.2"/></svg>
<svg class="a" style="left:678.8px;top:90.7px;overflow:visible" width="135.0" height="23.3"><text x="2" y="19.3" font-family="Liberation Mono" font-weight="bold" font-size="23.2" textLength="129.0" lengthAdjust="spacingAndGlyphs" fill="#000" transform="translate(1,1)" stroke="#000" stroke-width="2">XORG 68_13092004</text><text x="2" y="19.3" font-family="Liberation Mono" font-weight="bold" font-size="23.2" textLength="129.0" lengthAdjust="spacingAndGlyphs" fill="#fff" stroke="#fff" stroke-width="0.9">XORG 68_13092004</text></svg>
<svg class="a" style="left:721.0px;top:115.8px;overflow:visible" width="49.7" height="23.3"><text x="2" y="19.3" font-family="Liberation Mono" font-weight="bold" font-size="23.2" textLength="43.7" lengthAdjust="spacingAndGlyphs" fill="#000" transform="translate(1,1)" stroke="#000" stroke-width="2">MPEG</text><text x="2" y="19.3" font-family="Liberation Mono" font-weight="bold" font-size="23.2" textLength="43.7" lengthAdjust="spacingAndGlyphs" fill="#fff" stroke="#fff" stroke-width="0.9">MPEG</text></svg>
<svg class="a" style="left:832.6px;top:46.5px;" width="39.60000000000002" height="41.400000000000006" viewBox="0 0 39.60000000000002 41.400000000000006"><path d="M4 1 Q19.80000000000001 -1 35.60000000000002 1 Q39.60000000000002 2 37.60000000000002 8 Q35.60000000000002 20.700000000000003 37.60000000000002 33.400000000000006 Q39.60000000000002 39.400000000000006 35.60000000000002 40.400000000000006 Q19.80000000000001 42.400000000000006 4 40.400000000000006 Q0 39.400000000000006 2 33.400000000000006 Q4 20.700000000000003 2 8 Q0 2 4 1Z" fill="url(#gs)" stroke="#606068" stroke-width="1.2"/></svg>
<svg class="a" style="left:818.0px;top:93.4px;overflow:visible" width="71.6" height="23.3"><text x="2" y="19.3" font-family="Liberation Mono" font-weight="bold" font-size="23.2" textLength="65.6" lengthAdjust="spacingAndGlyphs" fill="#000" transform="translate(1,1)" stroke="#000" stroke-width="2">XORG.AVI</text><text x="2" y="19.3" font-family="Liberation Mono" font-weight="bold" font-size="23.2" textLength="65.6" lengthAdjust="spacingAndGlyphs" fill="#fff" stroke="#fff" stroke-width="0.9">XORG.AVI</text></svg>
<svg class="a" style="left:1057.3px;top:81.9px;" width="43.299999999999955" height="43.69999999999999" viewBox="0 0 43.299999999999955 43.69999999999999"><rect x="1" y="1" width="41.299999999999955" height="32.959999999999994" fill="url(#gmon)" stroke="#111" stroke-width="2"/><rect x="1" y="26.959999999999994" width="41.299999999999955" height="6" fill="#cfcfd4" stroke="#111"/><rect x="20.649999999999977" y="26.959999999999994" width="2" height="14.739999999999995" fill="#ddd"/><rect x="3" y="40.69999999999999" width="37.299999999999955" height="2.5" fill="#e8e8e8" opacity=".8"/></svg>
<svg class="a" style="left:1018.8px;top:128.6px;overflow:visible" width="123.0" height="24.0"><text x="2" y="20.0" font-family="Liberation Mono" font-weight="bold" font-size="24.2" textLength="117.0" lengthAdjust="spacingAndGlyphs" fill="#000" transform="translate(1,1)" stroke="#000" stroke-width="2">NETARTEU.ORG</text><text x="2" y="20.0" font-family="Liberation Mono" font-weight="bold" font-size="24.2" textLength="117.0" lengthAdjust="spacingAndGlyphs" fill="#fff" stroke="#fff" stroke-width="0.9">NETARTEU.ORG</text></svg>
<svg class="a" style="left:1180.5px;top:81.9px;" width="43.09999999999991" height="43.69999999999999" viewBox="0 0 43.09999999999991 43.69999999999999"><rect x="1" y="1" width="41.09999999999991" height="32.959999999999994" fill="url(#gmon)" stroke="#111" stroke-width="2"/><rect x="1" y="26.959999999999994" width="41.09999999999991" height="6" fill="#cfcfd4" stroke="#111"/><rect x="20.549999999999955" y="26.959999999999994" width="2" height="14.739999999999995" fill="#ddd"/><rect x="3" y="40.69999999999999" width="37.09999999999991" height="2.5" fill="#e8e8e8" opacity=".8"/></svg>
<svg class="a" style="left:1155.0px;top:128.6px;overflow:visible" width="98.0" height="24.0"><text x="2" y="20.0" font-family="Liberation Mono" font-weight="bold" font-size="24.2" textLength="92.0" lengthAdjust="spacingAndGlyphs" fill="#000" transform="translate(1,1)" stroke="#000" stroke-width="2">LOCALHOST</text><text x="2" y="20.0" font-family="Liberation Mono" font-weight="bold" font-size="24.2" textLength="92.0" lengthAdjust="spacingAndGlyphs" fill="#fff" stroke="#fff" stroke-width="0.9">LOCALHOST</text></svg>
<svg class="a" style="left:1184.0px;top:182.0px;overflow:visible" width="40.5" height="35" viewBox="0 0 40.5 35"><path d="M0.8 17.5 L0.8 10.5 Q0.8 5.6 6.1 5.2 L27.5 4.9 L28.3 2.8 L38.5 2.8 Q40.1 3.1 40.1 7.0 L40.1 17.5 L39.3 28.0 Q38.5 34.3 30.4 34.6 L10.1 34.6 Q2.0 34.3 1.2 28.0 Z" fill="url(#gpot2)" stroke="#3c3c44" stroke-width="1"/><path d="M2.0 7.7 Q20.2 5.6 38.5 7.7 L38.5 15.8 Q20.2 17.5 2.0 15.8Z" fill="#f4f4f8" opacity=".55"/><ellipse cx="21.1" cy="25.2" rx="11.3" ry="4.5" fill="#6a6e80" opacity=".35" filter="url(#pb)"/><path d="M0.8 17.9 L40.1 17.9" stroke="#34343c" stroke-width="1.1"/><path d="M1.2 18.9 L39.7 18.9" stroke="#f4f4f8" stroke-width="1" opacity=".7"/><path d="M32.0 0.0 L32.0 12.6 L35.1 8.6 L37.7 12.6 L39.6 11.6 L37.0 7.8 L41.1 7.6Z" fill="#26262a" stroke="#a8a8b0" stroke-width=".5"/></svg>
<svg class="a" style="left:1200.0px;top:225.0px;overflow:visible" width="14.0" height="23.0"><text x="2" y="19.0" font-family="Liberation Mono" font-weight="bold" font-size="22.7" textLength="8.0" lengthAdjust="spacingAndGlyphs" fill="#000" transform="translate(1,1)" stroke="#000" stroke-width="2">0</text><text x="2" y="19.0" font-family="Liberation Mono" font-weight="bold" font-size="22.7" textLength="8.0" lengthAdjust="spacingAndGlyphs" fill="#fff" stroke="#fff" stroke-width="0.9">0</text></svg>
<svg class="a" style="left:1181.5px;top:276.0px;" width="45.5" height="45.5" viewBox="0 0 45.5 45.5"><rect x="1" y="1" width="43.5" height="34.4" fill="url(#gmon)" stroke="#111" stroke-width="2"/><rect x="1" y="28.4" width="43.5" height="6" fill="#cfcfd4" stroke="#111"/><rect x="21.75" y="28.4" width="2" height="15.100000000000001" fill="#ddd"/><rect x="3" y="42.5" width="39.5" height="2.5" fill="#e8e8e8" opacity=".8"/></svg>
<svg class="a" style="left:1158.0px;top:323.6px;overflow:visible" width="93.6" height="24.4"><text x="2" y="20.4" font-family="Liberation Mono" font-weight="bold" font-size="24.8" textLength="87.6" lengthAdjust="spacingAndGlyphs" fill="#000" transform="translate(1,1)" stroke="#000" stroke-width="2">HTTP@KO</text><text x="2" y="20.4" font-family="Liberation Mono" font-weight="bold" font-size="24.8" textLength="87.6" lengthAdjust="spacingAndGlyphs" fill="#fff" stroke="#fff" stroke-width="0.9">HTTP@KO</text></svg>
<svg class="a" style="left:1187.6px;top:383.6px;" width="40.0" height="40.89999999999998" viewBox="0 0 40.0 40.89999999999998"><path d="M5 1 Q20.0 -1 35.0 1 Q40.0 2 39.0 8 Q37.0 20.44999999999999 39.0 32.89999999999998 Q40.0 38.89999999999998 35.0 39.89999999999998 Q20.0 41.89999999999998 5 39.89999999999998 Q0 38.89999999999998 1 32.89999999999998 Q3 20.44999999999999 1 8 Q0 2 5 1Z" fill="url(#gs2)" stroke="#4a4a52" stroke-width="1.2"/><rect x="6.8" y="6.5" width="26.4" height="1.5" fill="#5a5a64" opacity=".85"/><rect x="6.8" y="8.1" width="26.4" height="1.5" fill="#5a5a64" opacity=".85"/><rect x="6.8" y="9.6" width="26.4" height="1.5" fill="#5a5a64" opacity=".85"/><rect x="6.8" y="11.1" width="26.4" height="1.5" fill="#5a5a64" opacity=".85"/><rect x="6.8" y="12.6" width="26.4" height="1.5" fill="#5a5a64" opacity=".85"/><rect x="6.8" y="14.1" width="26.4" height="1.5" fill="#5a5a64" opacity=".85"/><rect x="6.8" y="15.7" width="26.4" height="1.5" fill="#5a5a64" opacity=".85"/><rect x="6.8" y="18.7" width="26.4" height="1.5" fill="#5a5a64" opacity=".85"/><rect x="6.8" y="20.2" width="26.4" height="1.5" fill="#5a5a64" opacity=".85"/><rect x="6.8" y="21.7" width="26.4" height="1.5" fill="#5a5a64" opacity=".85"/><rect x="6.8" y="23.3" width="26.4" height="1.5" fill="#5a5a64" opacity=".85"/><rect x="6.8" y="24.8" width="26.4" height="1.5" fill="#5a5a64" opacity=".85"/><rect x="6.8" y="26.3" width="26.4" height="1.5" fill="#5a5a64" opacity=".85"/><rect x="12.0" y="30.3" width="16.0" height="1.2" fill="#555" opacity=".7"/></svg>
<svg class="a" style="left:1139.5px;top:429.6px;overflow:visible" width="138.5" height="23.8"><text x="2" y="19.8" font-family="Liberation Mono" font-weight="bold" font-size="23.9" textLength="132.5" lengthAdjust="spacingAndGlyphs" fill="#000" transform="translate(1,1)" stroke="#000" stroke-width="2">BAR NETSTANDE</text><text x="2" y="19.8" font-family="Liberation Mono" font-weight="bold" font-size="23.9" textLength="132.5" lengthAdjust="spacingAndGlyphs" fill="#fff" stroke="#fff" stroke-width="0.9">BAR NETSTANDE</text></svg>
<svg class="a" style="left:1178.0px;top:453.9px;overflow:visible" width="59.0" height="23.1"><text x="2" y="19.1" font-family="Liberation Mono" font-weight="bold" font-size="22.9" textLength="53.0" lengthAdjust="spacingAndGlyphs" fill="#000" transform="translate(1,1)" stroke="#000" stroke-width="2">SKTOP</text><text x="2" y="19.1" font-family="Liberation Mono" font-weight="bold" font-size="22.9" textLength="53.0" lengthAdjust="spacingAndGlyphs" fill="#fff" stroke="#fff" stroke-width="0.9">SKTOP</text></svg>
<svg class="a" style="left:133.9px;top:694.5px;overflow:visible" width="73.4" height="67.89999999999998" viewBox="0 0 73.4 67.89999999999998"><path d="M1.5 33.9 L1.5 20.4 Q1.5 10.9 11.0 10.2 L49.9 9.5 L51.4 5.4 L69.7 5.4 Q72.7 6.1 72.7 13.6 L72.7 33.9 L71.2 54.3 Q69.7 66.5 55.1 67.2 L18.4 67.2 Q3.7 66.5 2.2 54.3 Z" fill="url(#gpot2)" stroke="#3c3c44" stroke-width="1"/><path d="M3.7 14.9 Q36.7 10.9 69.7 14.9 L69.7 30.6 Q36.7 33.9 3.7 30.6Z" fill="#f4f4f8" opacity=".55"/><ellipse cx="38.2" cy="48.9" rx="20.6" ry="8.8" fill="#6a6e80" opacity=".35" filter="url(#pb)"/><path d="M1.5 34.6 L72.7 34.6" stroke="#34343c" stroke-width="2.0"/><path d="M2.2 36.7 L71.9 36.7" stroke="#f4f4f8" stroke-width="1" opacity=".7"/><path d="M58.0 0.0 L58.0 24.4 L64.1 16.6 L69.0 24.4 L72.7 22.5 L67.8 15.2 L75.6 14.7Z" fill="#26262a" stroke="#a8a8b0" stroke-width=".5"/></svg>
<svg class="a" style="left:135.9px;top:774.9px;overflow:visible" width="70.5" height="23.3"><text x="2" y="19.3" font-family="Liberation Mono" font-weight="bold" font-size="23.2" textLength="64.5" lengthAdjust="spacingAndGlyphs" fill="#000" transform="translate(1,1)" stroke="#000" stroke-width="2">OBRAZKI</text><text x="2" y="19.3" font-family="Liberation Mono" font-weight="bold" font-size="23.2" textLength="64.5" lengthAdjust="spacingAndGlyphs" fill="#fff" stroke="#fff" stroke-width="0.9">OBRAZKI</text></svg>
<svg class="a" style="left:271.8px;top:704.6px;overflow:visible" width="43.30000000000001" height="38.39999999999998" viewBox="0 0 43.30000000000001 38.39999999999998"><path d="M0.9 19.2 L0.9 11.5 Q0.9 6.1 6.5 5.8 L29.4 5.4 L30.3 3.1 L41.1 3.1 Q42.9 3.5 42.9 7.7 L42.9 19.2 L42.0 30.7 Q41.1 37.6 32.5 38.0 L10.8 38.0 Q2.2 37.6 1.3 30.7 Z" fill="url(#gpot2)" stroke="#3c3c44" stroke-width="1"/><path d="M2.2 8.4 Q21.7 6.1 41.1 8.4 L41.1 17.3 Q21.7 19.2 2.2 17.3Z" fill="#f4f4f8" opacity=".55"/><ellipse cx="22.5" cy="27.6" rx="12.1" ry="5.0" fill="#6a6e80" opacity=".35" filter="url(#pb)"/><path d="M0.9 19.6 L42.9 19.6" stroke="#34343c" stroke-width="1.2"/><path d="M1.3 20.7 L42.4 20.7" stroke="#f4f4f8" stroke-width="1" opacity=".7"/><path d="M34.2 0.0 L34.2 13.8 L37.7 9.4 L40.4 13.8 L42.5 12.7 L39.7 8.6 L44.2 8.3Z" fill="#26262a" stroke="#a8a8b0" stroke-width=".5"/></svg>
<svg class="a" style="left:277.0px;top:750.6px;overflow:visible" width="35.0" height="23.6"><text x="2" y="19.6" font-family="Liberation Mono" font-weight="bold" font-size="23.6" textLength="29.0" lengthAdjust="spacingAndGlyphs" fill="#000" transform="translate(1,1)" stroke="#000" stroke-width="2">SUG</text><text x="2" y="19.6" font-family="Liberation Mono" font-weight="bold" font-size="23.6" textLength="29.0" lengthAdjust="spacingAndGlyphs" fill="#fff" stroke="#fff" stroke-width="0.9">SUG</text></svg>
<svg class="a" style="left:367.2px;top:708.3px;overflow:visible" width="29.80000000000001" height="25.200000000000045" viewBox="0 0 29.80000000000001 25.200000000000045"><path d="M0.6 12.6 L0.6 7.6 Q0.6 4.0 4.5 3.8 L20.3 3.5 L20.9 2.0 L28.3 2.0 Q29.5 2.3 29.5 5.0 L29.5 12.6 L28.9 20.2 Q28.3 24.7 22.4 24.9 L7.5 24.9 Q1.5 24.7 0.9 20.2 Z" fill="url(#gpot2)" stroke="#3c3c44" stroke-width="1"/><path d="M1.5 5.5 Q14.9 4.0 28.3 5.5 L28.3 11.3 Q14.9 12.6 1.5 11.3Z" fill="#f4f4f8" opacity=".55"/><ellipse cx="15.5" cy="18.1" rx="8.3" ry="3.3" fill="#6a6e80" opacity=".35" filter="url(#pb)"/><path d="M0.6 12.9 L29.5 12.9" stroke="#34343c" stroke-width="1.0"/><path d="M0.9 13.6 L29.2 13.6" stroke="#f4f4f8" stroke-width="1" opacity=".7"/><path d="M23.5 0.0 L23.5 9.1 L25.8 6.2 L27.6 9.1 L29.0 8.3 L27.2 5.6 L30.1 5.4Z" fill="#26262a" stroke="#a8a8b0" stroke-width=".5"/></svg>
<svg class="a" style="left:350.7px;top:738.2px;overflow:visible" width="65.9" height="24.4"><text x="2" y="20.4" font-family="Liberation Mono" font-weight="bold" font-size="24.8" textLength="59.9" lengthAdjust="spacingAndGlyphs" fill="#000" transform="translate(1,1)" stroke="#000" stroke-width="2">OLA_ANI</text><text x="2" y="20.4" font-family="Liberation Mono" font-weight="bold" font-size="24.8" textLength="59.9" lengthAdjust="spacingAndGlyphs" fill="#fff" stroke="#fff" stroke-width="0.9">OLA_ANI</text></svg>
<svg class="a" style="left:442.3px;top:709.0px;overflow:visible" width="21.69999999999999" height="18.700000000000045" viewBox="0 0 21.69999999999999 18.700000000000045"><path d="M0.4 9.4 L0.4 5.6 Q0.4 3.0 3.3 2.8 L14.8 2.6 L15.2 1.5 L20.6 1.5 Q21.5 1.7 21.5 3.7 L21.5 9.4 L21.0 15.0 Q20.6 18.3 16.3 18.5 L5.4 18.5 Q1.1 18.3 0.7 15.0 Z" fill="url(#gpot2)" stroke="#3c3c44" stroke-width="1"/><path d="M1.1 4.1 Q10.8 3.0 20.6 4.1 L20.6 8.4 Q10.8 9.4 1.1 8.4Z" fill="#f4f4f8" opacity=".55"/><ellipse cx="11.3" cy="13.5" rx="6.1" ry="2.4" fill="#6a6e80" opacity=".35" filter="url(#pb)"/><path d="M0.4 9.5 L21.5 9.5" stroke="#34343c" stroke-width="1.0"/><path d="M0.7 10.1 L21.3 10.1" stroke="#f4f4f8" stroke-width="1" opacity=".7"/><path d="M17.1 0.0 L17.1 6.7 L18.8 4.6 L20.2 6.7 L21.2 6.2 L19.8 4.2 L22.0 4.0Z" fill="#26262a" stroke="#a8a8b0" stroke-width=".5"/></svg>
<svg class="a" style="left:428.8px;top:731.5px;overflow:visible" width="50.2" height="23.3"><text x="2" y="19.3" font-family="Liberation Mono" font-weight="bold" font-size="23.2" textLength="44.2" lengthAdjust="spacingAndGlyphs" fill="#000" transform="translate(1,1)" stroke="#000" stroke-width="2">SYST</text><text x="2" y="19.3" font-family="Liberation Mono" font-weight="bold" font-size="23.2" textLength="44.2" lengthAdjust="spacingAndGlyphs" fill="#fff" stroke="#fff" stroke-width="0.9">SYST</text></svg>
<svg class="a" style="left:216.8px;top:786.4px;overflow:visible" width="53.5" height="47.39999999999998" viewBox="0 0 53.5 47.39999999999998"><path d="M1.1 23.7 L1.1 14.2 Q1.1 7.6 8.0 7.1 L36.4 6.6 L37.4 3.8 L50.8 3.8 Q53.0 4.3 53.0 9.5 L53.0 23.7 L51.9 37.9 Q50.8 46.5 40.1 46.9 L13.4 46.9 Q2.7 46.5 1.6 37.9 Z" fill="url(#gpot2)" stroke="#3c3c44" stroke-width="1"/><path d="M2.7 10.4 Q26.8 7.6 50.8 10.4 L50.8 21.3 Q26.8 23.7 2.7 21.3Z" fill="#f4f4f8" opacity=".55"/><ellipse cx="27.8" cy="34.1" rx="15.0" ry="6.2" fill="#6a6e80" opacity=".35" filter="url(#pb)"/><path d="M1.1 24.2 L53.0 24.2" stroke="#34343c" stroke-width="1.4"/><path d="M1.6 25.6 L52.4 25.6" stroke="#f4f4f8" stroke-width="1" opacity=".7"/><path d="M42.3 0.0 L42.3 17.1 L46.5 11.6 L49.9 17.1 L52.5 15.7 L49.1 10.6 L54.6 10.2Z" fill="#26262a" stroke="#a8a8b0" stroke-width=".5"/></svg>
<svg class="a" style="left:187.4px;top:843.1px;overflow:visible" width="114.4" height="24.5"><text x="2" y="20.5" font-family="Liberation Mono" font-weight="bold" font-size="25.0" textLength="108.4" lengthAdjust="spacingAndGlyphs" fill="#000" transform="translate(1,1)" stroke="#000" stroke-width="2">RASTERWORK</text><text x="2" y="20.5" font-family="Liberation Mono" font-weight="bold" font-size="25.0" textLength="108.4" lengthAdjust="spacingAndGlyphs" fill="#fff" stroke="#fff" stroke-width="0.9">RASTERWORK</text></svg>
<svg class="a" style="left:1036.0px;top:639.8px;overflow:visible" width="34.59999999999991" height="28.90000000000009" viewBox="0 0 34.59999999999991 28.90000000000009"><path d="M0.7 14.5 L0.7 8.7 Q0.7 4.6 5.2 4.3 L23.5 4.0 L24.2 2.3 L32.9 2.3 Q34.3 2.6 34.3 5.8 L34.3 14.5 L33.6 23.1 Q32.9 28.3 25.9 28.6 L8.6 28.6 Q1.7 28.3 1.0 23.1 Z" fill="url(#gpot2)" stroke="#3c3c44" stroke-width="1"/><path d="M1.7 6.4 Q17.3 4.6 32.9 6.4 L32.9 13.0 Q17.3 14.5 1.7 13.0Z" fill="#f4f4f8" opacity=".55"/><ellipse cx="18.0" cy="20.8" rx="9.7" ry="3.8" fill="#6a6e80" opacity=".35" filter="url(#pb)"/><path d="M0.7 14.7 L34.3 14.7" stroke="#34343c" stroke-width="1.0"/><path d="M1.0 15.6 L33.9 15.6" stroke="#f4f4f8" stroke-width="1" opacity=".7"/><path d="M27.3 0.0 L27.3 10.4 L29.9 7.1 L32.0 10.4 L33.6 9.6 L31.5 6.5 L34.8 6.2Z" fill="#26262a" stroke="#a8a8b0" stroke-width=".5"/></svg>
<svg class="a" style="left:1018.3px;top:675.7px;overflow:visible" width="72.0" height="23.2"><text x="2" y="19.2" font-family="Liberation Mono" font-weight="bold" font-size="23.0" textLength="66.0" lengthAdjust="spacingAndGlyphs" fill="#000" transform="translate(1,1)" stroke="#000" stroke-width="2">THEMES</text><text x="2" y="19.2" font-family="Liberation Mono" font-weight="bold" font-size="23.0" textLength="66.0" lengthAdjust="spacingAndGlyphs" fill="#fff" stroke="#fff" stroke-width="0.9">THEMES</text></svg>
<svg class="a" style="left:1035.0px;top:717.7px;overflow:visible" width="34.799999999999955" height="30.5" viewBox="0 0 34.799999999999955 30.5"><path d="M0.7 15.2 L0.7 9.2 Q0.7 4.9 5.2 4.6 L23.7 4.3 L24.4 2.4 L33.1 2.4 Q34.5 2.7 34.5 6.1 L34.5 15.2 L33.8 24.4 Q33.1 29.9 26.1 30.2 L8.7 30.2 Q1.7 29.9 1.0 24.4 Z" fill="url(#gpot2)" stroke="#3c3c44" stroke-width="1"/><path d="M1.7 6.7 Q17.4 4.9 33.1 6.7 L33.1 13.7 Q17.4 15.2 1.7 13.7Z" fill="#f4f4f8" opacity=".55"/><ellipse cx="18.1" cy="22.0" rx="9.7" ry="4.0" fill="#6a6e80" opacity=".35" filter="url(#pb)"/><path d="M0.7 15.6 L34.5 15.6" stroke="#34343c" stroke-width="1.0"/><path d="M1.0 16.5 L34.1 16.5" stroke="#f4f4f8" stroke-width="1" opacity=".7"/><path d="M27.5 0.0 L27.5 11.0 L30.2 7.5 L32.4 11.0 L34.1 10.1 L31.9 6.8 L35.4 6.6Z" fill="#26262a" stroke="#a8a8b0" stroke-width=".5"/></svg>
<svg class="a" style="left:1012.7px;top:755.1px;overflow:visible" width="80.7" height="24.3"><text x="2" y="20.3" font-family="Liberation Mono" font-weight="bold" font-size="24.7" textLength="74.7" lengthAdjust="spacingAndGlyphs" fill="#000" transform="translate(1,1)" stroke="#000" stroke-width="2">POBRANIA</text><text x="2" y="20.3" font-family="Liberation Mono" font-weight="bold" font-size="24.7" textLength="74.7" lengthAdjust="spacingAndGlyphs" fill="#fff" stroke="#fff" stroke-width="0.9">POBRANIA</text></svg>
<svg class="a" style="left:1036.8px;top:804.0px;overflow:visible" width="34.799999999999955" height="30.5" viewBox="0 0 34.799999999999955 30.5"><path d="M0.7 15.2 L0.7 9.2 Q0.7 4.9 5.2 4.6 L23.7 4.3 L24.4 2.4 L33.1 2.4 Q34.5 2.7 34.5 6.1 L34.5 15.2 L33.8 24.4 Q33.1 29.9 26.1 30.2 L8.7 30.2 Q1.7 29.9 1.0 24.4 Z" fill="url(#gpot2)" stroke="#3c3c44" stroke-width="1"/><path d="M1.7 6.7 Q17.4 4.9 33.1 6.7 L33.1 13.7 Q17.4 15.2 1.7 13.7Z" fill="#f4f4f8" opacity=".55"/><ellipse cx="18.1" cy="22.0" rx="9.7" ry="4.0" fill="#6a6e80" opacity=".35" filter="url(#pb)"/><path d="M0.7 15.6 L34.5 15.6" stroke="#34343c" stroke-width="1.0"/><path d="M1.0 16.5 L34.1 16.5" stroke="#f4f4f8" stroke-width="1" opacity=".7"/><path d="M27.5 0.0 L27.5 11.0 L30.2 7.5 L32.4 11.0 L34.1 10.1 L31.9 6.8 L35.4 6.6Z" fill="#26262a" stroke="#a8a8b0" stroke-width=".5"/></svg>
<svg class="a" style="left:1030.5px;top:840.7px;overflow:visible" width="49.7" height="24.0"><text x="2" y="20.0" font-family="Liberation Mono" font-weight="bold" font-size="24.2" textLength="43.7" lengthAdjust="spacingAndGlyphs" fill="#000" transform="translate(1,1)" stroke="#000" stroke-width="2">DOWN</text><text x="2" y="20.0" font-family="Liberation Mono" font-weight="bold" font-size="24.2" textLength="43.7" lengthAdjust="spacingAndGlyphs" fill="#fff" stroke="#fff" stroke-width="0.9">DOWN</text></svg>
<svg class="a" style="left:1138.0px;top:660.0px;" width="134" height="142" viewBox="0 0 134 142"><defs><linearGradient id="gbk" x1="0" y1="0" x2="1" y2="0"><stop offset="0" stop-color="#b8b8c0"/><stop offset=".2" stop-color="#f4f4f6"/><stop offset=".5" stop-color="#d4d4da"/><stop offset=".8" stop-color="#f0f0f2"/><stop offset="1" stop-color="#a8a8b0"/></linearGradient>
<linearGradient id="grad2" x1="0" y1="0" x2="0" y2="1"><stop offset="0" stop-color="#3a3a3e"/><stop offset="1" stop-color="#7a7a80"/></linearGradient></defs>
<path d="M30 20 L58 16 L60 40 L32 44Z" fill="#e0e0e0" stroke="#444" stroke-width="1"/>
<path d="M56 12 L96 18 L93 44 L54 38Z" fill="#f0f0f0" stroke="#555" stroke-width="1.2"/><path d="M60 17 L92 22 L90 40 L58 35Z" fill="#0a0a0a"/>
<path d="M96 26 Q112 30 112 50 L96 52Z" fill="#d8d8dc" stroke="#777"/>
<circle cx="98" cy="52" r="16" fill="#e8e8ea" stroke="#888"/><circle cx="98" cy="52" r="4" fill="#aaa"/>
<path d="M27 34 L80 26 L86 60 L32 66Z" fill="#ececee" stroke="#666" stroke-width="1.2"/><circle cx="58" cy="48" r="11" fill="#d0d0d4" stroke="#888"/><path d="M52 54 L54 42 L58 50 L62 42 L64 54" stroke="#555" stroke-width="2.5" fill="none"/>
<path d="M6 52 L126 52 L112 128 Q108 138 67 138 Q26 138 22 128Z" fill="url(#gbk)" stroke="#6a6a72" stroke-width="1.3"/>
<ellipse cx="66.7" cy="48" rx="64" ry="11.5" fill="#e4e4e8" stroke="#7a7a82" stroke-width="1.3"/>
<ellipse cx="66.7" cy="46" rx="54" ry="7" fill="#5a5a60" opacity=".35"/>
<path d="M3 50 Q66.7 72 130.5 50" fill="none" stroke="#8a8a92" stroke-width="2"/>
<path d="M4 55 Q66.7 76 129 55" fill="none" stroke="#f8f8fa" stroke-width="1.5"/>
<path d="M66.7 95.4 L42.7 95.4 A24 24 0 0 1 54.7 74.6Z" fill="url(#grad2)"/><path d="M66.7 95.4 L78.7 74.6 A24 24 0 0 1 90.7 95.4Z" fill="url(#grad2)"/><path d="M66.7 95.4 L78.7 116.2 A24 24 0 0 1 54.7 116.2Z" fill="url(#grad2)"/><circle cx="66.7" cy="95.4" r="4.5" fill="#e8e8ea" stroke="#777"/></svg>
<svg class="a" style="left:1164.0px;top:807.7px;overflow:visible" width="84.0" height="22.0"><text x="2" y="18.0" font-family="Liberation Mono" font-weight="bold" font-size="21.2" textLength="78.0" lengthAdjust="spacingAndGlyphs" fill="#000" transform="translate(1,1)" stroke="#000" stroke-width="2">SMIETNIK</text><text x="2" y="18.0" font-family="Liberation Mono" font-weight="bold" font-size="21.2" textLength="78.0" lengthAdjust="spacingAndGlyphs" fill="#fff" stroke="#fff" stroke-width="0.9">SMIETNIK</text></svg>
<svg class="a" style="left:1167.0px;top:805.0px;" width="10" height="5" viewBox="0 0 10 5"><path d="M2 5 L8 0" stroke="#fff" stroke-width="2.5"/></svg>
<div class="win" style="left:199px;top:147px;width:667px;height:505px">
<div class="tbar" style="height:26px"></div>
<div class="a" style="left:0.0px;top:26.0px;width:8.0px;height:478.0px;background:linear-gradient(90deg,#fafafa,#e9e9e9)"></div>
<div class="a" style="left:14.0px;top:10.5px;width:10.5px;height:1.6px;background:#222"></div>
<div class="a" style="left:14.0px;top:14.0px;width:10.5px;height:1.6px;background:#222"></div>
<svg class="a" style="left:247.0px;top:4.0px;" width="16" height="15" viewBox="0 0 16 15"><rect x="1" y="3" width="13" height="9" rx="2" fill="#3a7ab8" transform="rotate(-12 8 8)"/><rect x="4" y="5" width="3" height="3" fill="#dfe8f0" transform="rotate(-12 8 8)"/><rect x="9" y="7" width="3" height="3" fill="#dfe8f0" transform="rotate(-12 8 8)"/></svg>
<div class="t" style="left:267.0px;top:6.7px;font-size:12.5px;line-height:15.0px;color:#8c8c8c;letter-spacing:0.75px;font-weight:normal;font-style:normal;">Device Manager</div>
<div class="a" style="left:598.0px;top:13.5px;width:9.0px;height:3.0px;background:#1c1c1c"></div>
<div class="a" style="left:621.0px;top:8.0px;width:9.0px;height:9.0px;border:1.5px solid #1c1c1c;border-top-width:3px"></div>
<svg class="a" style="left:644.0px;top:8.0px;" width="11" height="10" viewBox="0 0 11 10"><path d="M1 1 L10 9 M10 1 L1 9" stroke="#1c1c1c" stroke-width="1.8"/></svg>
<div class="a" style="left:9.0px;top:25.0px;width:649.0px;height:25.0px;background:#d6d1d9;border-top:1px solid #9c9c9c"></div>
<div class="t" style="left:19.5px;top:32.2px;font-size:12.5px;line-height:15.0px;color:#2e2e2e;letter-spacing:0.6px;font-weight:normal;font-style:normal;"><span class="u">P</span>lik</div>
<div class="t" style="left:54.0px;top:32.2px;font-size:12.5px;line-height:15.0px;color:#2e2e2e;letter-spacing:0.6px;font-weight:normal;font-style:normal;"><span class="u">W</span>idok</div>
<div class="t" style="left:108.0px;top:32.2px;font-size:12.5px;line-height:15.0px;color:#2e2e2e;letter-spacing:0.6px;font-weight:normal;font-style:normal;">Pomo<span class="u">c</span></div>
<div class="a" style="left:9.0px;top:50.0px;width:231.0px;height:27.0px;background:#efedef;border-bottom:1px solid #a4a4a4"></div>
<div class="t" style="left:12.5px;top:57.7px;font-size:12.5px;line-height:15.0px;color:#2e2e2e;letter-spacing:0.7px;font-weight:normal;font-style:normal;">Devices</div>
<div class="a" style="left:9.0px;top:77.0px;width:231.0px;height:401.0px;background:#fff"></div>
<div class="a" style="left:9.0px;top:317.0px;width:231.0px;height:24.0px;background:#d8d3da"></div>
<div class="a" style="left:9px;top:77px;width:231px;height:401px;overflow:hidden">
<svg class="a" style="left:1.5px;top:8.5px;" width="12" height="8" viewBox="0 0 12 8"><path d="M0.5 0.5 L10.5 0.5 L5.5 6 Z" fill="none" stroke="#111" stroke-width="1"/></svg>
<svg class="a" style="left:16.5px;top:5.0px;" width="16" height="15" viewBox="0 0 16 15"><rect x="2.5" y="0.5" width="11" height="9" fill="#f0f0f0" stroke="#888"/><rect x="4" y="2" width="8" height="6" fill="#4a7ab0"/><path d="M0.5 14.5 L2.5 10.5 L13.5 10.5 L15.5 14.5 Z" fill="#ddd" stroke="#888"/></svg>
<div class="t" style="left:35.0px;top:6.0px;font-size:12.5px;line-height:15.0px;color:#2e2e2e;letter-spacing:0.6px;font-weight:normal;font-style:normal;">Computer</div>
<svg class="a" style="left:32.0px;top:29.0px;" width="15" height="12" viewBox="0 0 15 12"><path d="M1 5 L6 1 L14 4 L14 8 L9 11 L1 9 Z" fill="#e8e8e8" stroke="#7a7a7a"/><path d="M1 5 L9 8 L14 5" fill="none" stroke="#999"/><circle cx="12" cy="7.5" r="0.8" fill="#4c4"/></svg>
<div class="t" style="left:48.0px;top:30.0px;font-size:12.5px;line-height:15.0px;color:#2e2e2e;letter-spacing:0.6px;font-weight:normal;font-style:normal;">Legacy Floppy Drive</div>
<svg class="a" style="left:30.0px;top:53.0px;" width="17" height="16" viewBox="0 0 17 16"><rect x="1" y="4" width="13" height="9" rx="1" fill="#5e8a4a" stroke="#3a4a30"/><rect x="3" y="5.5" width="5" height="3" fill="#ccc"/><rect x="9" y="5.5" width="1.5" height="3" fill="#c44"/><rect x="11" y="5.5" width="1.5" height="3" fill="#c44"/><rect x="3" y="11" width="9" height="2.5" fill="#d4b44a"/><path d="M14 1 L14 15 M14 1 L16 1" stroke="#333" stroke-width="1.3" fill="none"/></svg>
<div class="t" style="left:48.0px;top:54.0px;font-size:12.5px;line-height:15.0px;color:#2e2e2e;letter-spacing:0.6px;font-weight:normal;font-style:normal;">RTL-8139/8139C/8139C+</div>
<svg class="a" style="left:30.0px;top:77.0px;" width="17" height="16" viewBox="0 0 17 16"><rect x="1" y="4" width="13" height="9" rx="1" fill="#5e8a4a" stroke="#3a4a30"/><rect x="3" y="5.5" width="5" height="3" fill="#ccc"/><rect x="9" y="5.5" width="1.5" height="3" fill="#c44"/><rect x="11" y="5.5" width="1.5" height="3" fill="#c44"/><rect x="3" y="11" width="9" height="2.5" fill="#d4b44a"/><path d="M14 1 L14 15 M14 1 L16 1" stroke="#333" stroke-width="1.3" fill="none"/></svg>
<div class="t" style="left:48.0px;top:78.0px;font-size:12.5px;line-height:15.0px;color:#2e2e2e;letter-spacing:0.6px;font-weight:normal;font-style:normal;">SB Live! EMU10k1</div>
<svg class="a" style="left:30.0px;top:101.0px;" width="17" height="16" viewBox="0 0 17 16"><rect x="1" y="4" width="13" height="9" rx="1" fill="#5e8a4a" stroke="#3a4a30"/><rect x="3" y="5.5" width="5" height="3" fill="#ccc"/><rect x="9" y="5.5" width="1.5" height="3" fill="#c44"/><rect x="11" y="5.5" width="1.5" height="3" fill="#c44"/><rect x="3" y="11" width="9" height="2.5" fill="#d4b44a"/><path d="M14 1 L14 15 M14 1 L16 1" stroke="#333" stroke-width="1.3" fill="none"/></svg>
<div class="t" style="left:48.0px;top:102.0px;font-size:12.5px;line-height:15.0px;color:#2e2e2e;letter-spacing:0.6px;font-weight:normal;font-style:normal;">SB Live! MIDI/Game Port</div>
<svg class="a" style="left:15.5px;top:128.5px;" width="12" height="8" viewBox="0 0 12 8"><path d="M0.5 0.5 L10.5 0.5 L5.5 6 Z" fill="none" stroke="#111" stroke-width="1"/></svg>
<svg class="a" style="left:30.0px;top:125.0px;" width="17" height="16" viewBox="0 0 17 16"><rect x="1" y="4" width="13" height="9" rx="1" fill="#5e8a4a" stroke="#3a4a30"/><rect x="3" y="5.5" width="5" height="3" fill="#ccc"/><rect x="9" y="5.5" width="1.5" height="3" fill="#c44"/><rect x="11" y="5.5" width="1.5" height="3" fill="#c44"/><rect x="3" y="11" width="9" height="2.5" fill="#d4b44a"/><path d="M14 1 L14 15 M14 1 L16 1" stroke="#333" stroke-width="1.3" fill="none"/></svg>
<div class="t" style="left:48.0px;top:126.0px;font-size:12.5px;line-height:15.0px;color:#2e2e2e;letter-spacing:0.6px;font-weight:normal;font-style:normal;">VT82xxxxx UHCI USB 1.1 Controller</div>
<svg class="a" style="left:29.5px;top:152.5px;" width="12" height="8" viewBox="0 0 12 8"><path d="M0.5 0.5 L10.5 0.5 L5.5 6 Z" fill="none" stroke="#111" stroke-width="1"/></svg>
<svg class="a" style="left:44.0px;top:149.0px;" width="17" height="16" viewBox="0 0 17 16"><path d="M2 8 L15 8 M5 8 L8 3 L12 3 M8 8 L11 13 L13 13" stroke="#222" stroke-width="2" fill="none"/><circle cx="3" cy="8" r="2.5" fill="#333"/><rect x="11" y="1.5" width="3.5" height="3.5" fill="#444"/><circle cx="13.5" cy="13" r="2" fill="#444"/><path d="M15 6 L17 8 L15 10Z" fill="#222"/></svg>
<div class="t" style="left:62.0px;top:150.0px;font-size:12.5px;line-height:15.0px;color:#2e2e2e;letter-spacing:0.6px;font-weight:normal;font-style:normal;">VIA Technologies, Inc. VT82xxxxx</div>
<svg class="a" style="left:43.5px;top:176.5px;" width="12" height="8" viewBox="0 0 12 8"><path d="M0.5 0.5 L10.5 0.5 L5.5 6 Z" fill="none" stroke="#111" stroke-width="1"/></svg>
<svg class="a" style="left:58.0px;top:173.0px;" width="17" height="16" viewBox="0 0 17 16"><path d="M2 8 L15 8 M5 8 L8 3 L12 3 M8 8 L11 13 L13 13" stroke="#222" stroke-width="2" fill="none"/><circle cx="3" cy="8" r="2.5" fill="#333"/><rect x="11" y="1.5" width="3.5" height="3.5" fill="#444"/><circle cx="13.5" cy="13" r="2" fill="#444"/><path d="M15 6 L17 8 L15 10Z" fill="#222"/></svg>
<div class="t" style="left:76.0px;top:174.0px;font-size:12.5px;line-height:15.0px;color:#2e2e2e;letter-spacing:0.6px;font-weight:normal;font-style:normal;">deskjet 5550</div>
<svg class="a" style="left:74.0px;top:197.0px;" width="15" height="12" viewBox="0 0 15 12"><path d="M1 5 L6 1 L14 4 L14 8 L9 11 L1 9 Z" fill="#e8e8e8" stroke="#7a7a7a"/><path d="M1 5 L9 8 L14 5" fill="none" stroke="#999"/><circle cx="12" cy="7.5" r="0.8" fill="#4c4"/></svg>
<div class="t" style="left:90.0px;top:198.0px;font-size:12.5px;line-height:15.0px;color:#2e2e2e;letter-spacing:0.6px;font-weight:normal;font-style:normal;">deskjet 5550</div>
<svg class="a" style="left:43.5px;top:224.5px;" width="12" height="8" viewBox="0 0 12 8"><path d="M0.5 0.5 L10.5 0.5 L5.5 6 Z" fill="none" stroke="#111" stroke-width="1"/></svg>
<svg class="a" style="left:58.0px;top:221.0px;" width="17" height="16" viewBox="0 0 17 16"><path d="M2 8 L15 8 M5 8 L8 3 L12 3 M8 8 L11 13 L13 13" stroke="#222" stroke-width="2" fill="none"/><circle cx="3" cy="8" r="2.5" fill="#333"/><rect x="11" y="1.5" width="3.5" height="3.5" fill="#444"/><circle cx="13.5" cy="13" r="2" fill="#444"/><path d="M15 6 L17 8 L15 10Z" fill="#222"/></svg>
<div class="t" style="left:76.0px;top:222.0px;font-size:12.5px;line-height:15.0px;color:#2e2e2e;letter-spacing:0.6px;font-weight:normal;font-style:normal;">Mustek BearPaw 2400 Scanner</div>
<svg class="a" style="left:74.0px;top:245.0px;" width="15" height="12" viewBox="0 0 15 12"><path d="M1 5 L6 1 L14 4 L14 8 L9 11 L1 9 Z" fill="#e8e8e8" stroke="#7a7a7a"/><path d="M1 5 L9 8 L14 5" fill="none" stroke="#999"/><circle cx="12" cy="7.5" r="0.8" fill="#4c4"/></svg>
<div class="t" style="left:90.0px;top:246.0px;font-size:12.5px;line-height:15.0px;color:#3a3a58;letter-spacing:0.6px;font-weight:normal;font-style:normal;">USB Interface</div>
<svg class="a" style="left:60.0px;top:269.0px;" width="15" height="12" viewBox="0 0 15 12"><path d="M1 5 L6 1 L14 4 L14 8 L9 11 L1 9 Z" fill="#e8e8e8" stroke="#7a7a7a"/><path d="M1 5 L9 8 L14 5" fill="none" stroke="#999"/><circle cx="12" cy="7.5" r="0.8" fill="#4c4"/></svg>
<div class="t" style="left:76.0px;top:270.0px;font-size:12.5px;line-height:15.0px;color:#2e2e2e;letter-spacing:0.6px;font-weight:normal;font-style:normal;">USB Hub Interface</div>
<svg class="a" style="left:15.5px;top:294.5px;" width="8" height="12" viewBox="0 0 8 12"><path d="M0.5 0.5 L6 5.5 L0.5 10.5 Z" fill="none" stroke="#111" stroke-width="1"/></svg>
<svg class="a" style="left:30.0px;top:293.0px;" width="17" height="16" viewBox="0 0 17 16"><rect x="1" y="4" width="13" height="9" rx="1" fill="#5e8a4a" stroke="#3a4a30"/><rect x="3" y="5.5" width="5" height="3" fill="#ccc"/><rect x="9" y="5.5" width="1.5" height="3" fill="#c44"/><rect x="11" y="5.5" width="1.5" height="3" fill="#c44"/><rect x="3" y="11" width="9" height="2.5" fill="#d4b44a"/><path d="M14 1 L14 15 M14 1 L16 1" stroke="#333" stroke-width="1.3" fill="none"/></svg>
<div class="t" style="left:48.0px;top:294.0px;font-size:12.5px;line-height:15.0px;color:#2e2e2e;letter-spacing:0.6px;font-weight:normal;font-style:normal;">VT82xxxxx UHCI USB 1.1 Controller</div>
<svg class="a" style="left:30.0px;top:317.0px;" width="17" height="16" viewBox="0 0 17 16"><rect x="1" y="4" width="13" height="9" rx="1" fill="#5e8a4a" stroke="#3a4a30"/><rect x="3" y="5.5" width="5" height="3" fill="#ccc"/><rect x="9" y="5.5" width="1.5" height="3" fill="#c44"/><rect x="11" y="5.5" width="1.5" height="3" fill="#c44"/><rect x="3" y="11" width="9" height="2.5" fill="#d4b44a"/><path d="M14 1 L14 15 M14 1 L16 1" stroke="#333" stroke-width="1.3" fill="none"/></svg>
<div class="t" style="left:48.0px;top:318.0px;font-size:12.5px;line-height:15.0px;color:#2e2e2e;letter-spacing:0.6px;font-weight:normal;font-style:normal;">VT8233/A/8235/8237 AC97 Audio</div>
<svg class="a" style="left:30.0px;top:341.0px;" width="17" height="16" viewBox="0 0 17 16"><rect x="1" y="4" width="13" height="9" rx="1" fill="#5e8a4a" stroke="#3a4a30"/><rect x="3" y="5.5" width="5" height="3" fill="#ccc"/><rect x="9" y="5.5" width="1.5" height="3" fill="#c44"/><rect x="11" y="5.5" width="1.5" height="3" fill="#c44"/><rect x="3" y="11" width="9" height="2.5" fill="#d4b44a"/><path d="M14 1 L14 15 M14 1 L16 1" stroke="#333" stroke-width="1.3" fill="none"/></svg>
<div class="t" style="left:48.0px;top:342.0px;font-size:12.5px;line-height:15.0px;color:#2e2e2e;letter-spacing:0.6px;font-weight:normal;font-style:normal;">VT8366/A/7 (Apollo KT266/A/333)</div>
<svg class="a" style="left:30.0px;top:365.0px;" width="17" height="16" viewBox="0 0 17 16"><rect x="1" y="4" width="13" height="9" rx="1" fill="#5e8a4a" stroke="#3a4a30"/><rect x="3" y="5.5" width="5" height="3" fill="#ccc"/><rect x="9" y="5.5" width="1.5" height="3" fill="#c44"/><rect x="11" y="5.5" width="1.5" height="3" fill="#c44"/><rect x="3" y="11" width="9" height="2.5" fill="#d4b44a"/><path d="M14 1 L14 15 M14 1 L16 1" stroke="#333" stroke-width="1.3" fill="none"/></svg>
<div class="t" style="left:48.0px;top:366.0px;font-size:12.5px;line-height:15.0px;color:#2e2e2e;letter-spacing:0.6px;font-weight:normal;font-style:normal;">VT8233A ISA Bridge</div>
<svg class="a" style="left:15.5px;top:390.5px;" width="8" height="12" viewBox="0 0 8 12"><path d="M0.5 0.5 L6 5.5 L0.5 10.5 Z" fill="none" stroke="#111" stroke-width="1"/></svg>
<svg class="a" style="left:30.0px;top:389.0px;" width="17" height="16" viewBox="0 0 17 16"><rect x="1" y="4" width="13" height="9" rx="1" fill="#5e8a4a" stroke="#3a4a30"/><rect x="3" y="5.5" width="5" height="3" fill="#ccc"/><rect x="9" y="5.5" width="1.5" height="3" fill="#c44"/><rect x="11" y="5.5" width="1.5" height="3" fill="#c44"/><rect x="3" y="11" width="9" height="2.5" fill="#d4b44a"/><path d="M14 1 L14 15 M14 1 L16 1" stroke="#333" stroke-width="1.3" fill="none"/></svg>
<div class="t" style="left:48.0px;top:390.0px;font-size:12.5px;line-height:15.0px;color:#2e2e2e;letter-spacing:0.6px;font-weight:normal;font-style:normal;">VT82C586A/B/VT82C686/A/B</div>
</div>
<div class="a" style="left:243.0px;top:51.0px;width:15.0px;height:427.0px;background:#d6d1d9;border:1px solid #9a98a0"></div>
<div class="a" style="left:243.0px;top:51.0px;width:15.0px;height:15.0px;background:linear-gradient(90deg,#fcfcfc,#ecebee);border:1px solid #9a98a0"></div>
<svg class="a" style="left:247.0px;top:56.0px;" width="8" height="5" viewBox="0 0 8 5"><path d="M0 5 L4 0 L8 5Z" fill="#111"/></svg>
<div class="a" style="left:243.0px;top:65.0px;width:15.0px;height:332.0px;background:linear-gradient(90deg,#fafafa,#efebf1);border:1px solid #9a98a0"></div>
<div class="a" style="left:243.0px;top:463.0px;width:15.0px;height:15.0px;background:linear-gradient(90deg,#fcfcfc,#ecebee);border:1px solid #9a98a0"></div>
<svg class="a" style="left:247.0px;top:468.0px;" width="8" height="5" viewBox="0 0 8 5"><path d="M0 0 L4 5 L8 0Z" fill="#111"/></svg>
<div class="a" style="left:259.0px;top:270.0px;width:2.0px;height:1.5px;background:#999"></div>
<div class="a" style="left:259.0px;top:273.0px;width:2.0px;height:1.5px;background:#999"></div>
<div class="a" style="left:259.0px;top:276.0px;width:2.0px;height:1.5px;background:#999"></div>
<div class="a" style="left:9.0px;top:481.0px;width:231.0px;height:15.0px;background:#d6d1d9;border:1px solid #9a98a0"></div>
<div class="a" style="left:9.0px;top:481.0px;width:15.0px;height:15.0px;background:linear-gradient(#fcfcfc,#ecebee);border:1px solid #9a98a0"></div>
<svg class="a" style="left:13.0px;top:484.0px;" width="5" height="8" viewBox="0 0 5 8"><path d="M5 0 L0 4 L5 8Z" fill="#111"/></svg>
<div class="a" style="left:23.0px;top:481.0px;width:91.0px;height:15.0px;background:linear-gradient(#fafafa,#efebf1);border:1px solid #9a98a0"></div>
<div class="a" style="left:225.0px;top:481.0px;width:15.0px;height:15.0px;background:linear-gradient(#fcfcfc,#ecebee);border:1px solid #9a98a0"></div>
<svg class="a" style="left:230.0px;top:484.0px;" width="5" height="8" viewBox="0 0 5 8"><path d="M0 0 L5 4 L0 8Z" fill="#111"/></svg>
<div class="a" style="left:264.0px;top:76.0px;width:395.0px;height:420.0px;background:#ececec;border-left:1px solid #f6f6f6;border-top:1px solid #f6f6f6;border-right:1px solid #c4c4c4;border-bottom:1px solid #c4c4c4"></div>
<div class="a" style="left:265.0px;top:53.0px;width:53.0px;height:24.0px;background:linear-gradient(#dcd8de,#cfcbd2);border:1px solid #c0bcc2;border-bottom:none"></div>
<div class="a" style="left:318.0px;top:50.0px;width:33.0px;height:27.0px;background:#ececec;border-top:1px solid #f8f8f8"></div>
<div class="a" style="left:351.0px;top:53.0px;width:79.0px;height:24.0px;background:linear-gradient(#dcd8de,#cfcbd2);border:1px solid #c0bcc2;border-bottom:none"></div>
<div class="t" style="left:270.5px;top:59.7px;font-size:12.5px;line-height:15.0px;color:#2e2e2e;letter-spacing:0.6px;font-weight:normal;font-style:normal;">Device</div>
<div class="t" style="left:324.0px;top:59.7px;font-size:12.5px;line-height:15.0px;color:#2e2e2e;letter-spacing:-0.2px;font-weight:normal;font-style:normal;">USB</div>
<div class="t" style="left:356.5px;top:59.7px;font-size:12.5px;line-height:15.0px;color:#2e2e2e;letter-spacing:0.75px;font-weight:normal;font-style:normal;">Advanced</div>
<div class="t" style="left:-13.5px;width:400px;text-align:right;top:93.2px;font-size:12.5px;line-height:15.0px;color:#2e2e2e;letter-spacing:0.1px;font-weight:bold;">USB Version:</div>
<div class="t" style="left:392.5px;top:93.2px;font-size:12.5px;line-height:15.0px;color:#2e2e2e;letter-spacing:0.6px;font-weight:normal;font-style:normal;">1.1</div>
<div class="t" style="left:-13.5px;width:400px;text-align:right;top:116.8px;font-size:12.5px;line-height:15.0px;color:#2e2e2e;letter-spacing:0.1px;font-weight:bold;">Bandwidth:</div>
<div class="t" style="left:392.5px;top:116.8px;font-size:12.5px;line-height:15.0px;color:#2e2e2e;letter-spacing:0.6px;font-weight:normal;font-style:normal;">12.0 Mbit/s</div>
<div class="t" style="left:-13.5px;width:400px;text-align:right;top:139.2px;font-size:12.5px;line-height:15.0px;color:#2e2e2e;letter-spacing:0.1px;font-weight:bold;">Power Usage:</div>
<div class="t" style="left:392.5px;top:139.2px;font-size:12.5px;line-height:15.0px;color:#2e2e2e;letter-spacing:0.6px;font-weight:normal;font-style:normal;">2 mA</div>
<div class="t" style="left:-13.5px;width:400px;text-align:right;top:169.2px;font-size:12.5px;line-height:15.0px;color:#2e2e2e;letter-spacing:0.1px;font-weight:bold;">Vendor:</div>
<div class="t" style="left:392.5px;top:169.2px;font-size:12.5px;line-height:15.0px;color:#2e2e2e;letter-spacing:0.6px;font-weight:normal;font-style:normal;">National Semiconductor Corp.</div>
<div class="t" style="left:-13.5px;width:400px;text-align:right;top:191.2px;font-size:12.5px;line-height:15.0px;color:#2e2e2e;letter-spacing:0.1px;font-weight:bold;">Product:</div>
<div class="t" style="left:392.5px;top:191.2px;font-size:12.5px;line-height:15.0px;color:#2e2e2e;letter-spacing:0.6px;font-weight:normal;font-style:normal;">Mustek BearPaw 2400 Scanner</div>
<div class="t" style="left:-13.5px;width:400px;text-align:right;top:213.2px;font-size:12.5px;line-height:15.0px;color:#2e2e2e;letter-spacing:0.1px;font-weight:bold;">Revision:</div>
<div class="t" style="left:392.5px;top:213.2px;font-size:12.5px;line-height:15.0px;color:#2e2e2e;letter-spacing:0.6px;font-weight:normal;font-style:normal;">1.0</div>
<div class="a" style="left:659.0px;top:26.0px;width:8.0px;height:478.0px;background:linear-gradient(90deg,#e9e9e9,#d4d4d4 80%,#c4c4c4)"></div>
</div>
<div class="win" style="left:563px;top:476px;width:433px;height:503px">
<div class="tbar" style="height:28px"></div>
<div class="a" style="left:0.0px;top:24.0px;width:8.0px;height:478.0px;background:linear-gradient(90deg,#fafafa,#e9e9e9)"></div>
<div class="a" style="left:13.0px;top:11.3px;width:10.5px;height:1.6px;background:#222"></div>
<div class="a" style="left:13.0px;top:14.8px;width:10.5px;height:1.6px;background:#222"></div>
<svg class="a" style="left:100.0px;top:4.0px;" width="17" height="17" viewBox="0 0 17 17"><rect x="0.5" y="0.5" width="15" height="12" fill="#e8e8e8" stroke="#666"/><rect x="2.5" y="2.5" width="11" height="8" fill="#cfd2d6"/><rect x="2" y="13" width="12" height="3" fill="#ddd" stroke="#777" stroke-width="0.8"/></svg>
<div class="t" style="left:121.0px;top:6.7px;font-size:12.5px;line-height:15.0px;color:#8c8c8c;letter-spacing:0.55px;font-weight:normal;font-style:normal;">Właściwości netart.eu.org</div>
<div class="a" style="left:363.0px;top:13.5px;width:9.0px;height:3.0px;background:#1c1c1c"></div>
<div class="a" style="left:386.0px;top:8.0px;width:9.0px;height:9.0px;border:1.5px solid #1c1c1c;border-top-width:3px"></div>
<svg class="a" style="left:409.0px;top:8.0px;" width="11" height="10" viewBox="0 0 11 10"><path d="M1 1 L10 9 M10 1 L1 9" stroke="#1c1c1c" stroke-width="1.8"/></svg>
<div class="a" style="left:13.5px;top:56.0px;width:405.0px;height:392.0px;background:#ececec;border-left:1px solid #f8f8f8;border-top:1px solid #f8f8f8;border-right:1px solid #c4c4c4;border-bottom:1px solid #c4c4c4"></div>
<div class="a" style="left:13.5px;top:32.0px;width:48.8px;height:24.0px;background:linear-gradient(#dcd8de,#cfcbd2);border:1px solid #c0bcc2;border-bottom:none"></div>
<div class="t" style="left:19.3px;top:38.2px;font-size:12.5px;line-height:15.0px;color:#2e2e2e;letter-spacing:0.5px;font-weight:normal;font-style:normal;">Proste</div>
<div class="a" style="left:62.3px;top:32.0px;width:64.0px;height:24.0px;background:linear-gradient(#dcd8de,#cfcbd2);border:1px solid #c0bcc2;border-bottom:none"></div>
<div class="t" style="left:67.5px;top:38.2px;font-size:12.5px;line-height:15.0px;color:#2e2e2e;letter-spacing:0.5px;font-weight:normal;font-style:normal;">Symbole</div>
<div class="a" style="left:126.3px;top:32.0px;width:89.7px;height:24.0px;background:linear-gradient(#dcd8de,#cfcbd2);border:1px solid #c0bcc2;border-bottom:none"></div>
<div class="t" style="left:131.0px;top:38.2px;font-size:12.5px;line-height:15.0px;color:#2e2e2e;letter-spacing:0.5px;font-weight:normal;font-style:normal;">Uprawnienia</div>
<div class="a" style="left:216.0px;top:29.5px;width:148.0px;height:27.5px;background:linear-gradient(#fafafa,#ececec);border-top:1px solid #f8f8f8;border-right:1px solid #c8c8c8"></div>
<div class="t" style="left:222.0px;top:38.2px;font-size:12.5px;line-height:15.0px;color:#2e2e2e;letter-spacing:0.55px;font-weight:normal;font-style:normal;">Otwarcie za pomocą</div>
<div class="t" style="left:23.5px;top:67.4px;font-size:12.5px;line-height:15.0px;color:#2e2e2e;letter-spacing:0.6px;font-weight:normal;font-style:normal;">Select an application to open <i>netart.eu.org</i> and</div>
<div class="t" style="left:23.5px;top:85.2px;font-size:12.5px;line-height:15.0px;color:#2e2e2e;letter-spacing:0.6px;font-weight:normal;font-style:normal;">others of type "HTML document"</div>
<div class="a" style="left:23.5px;top:106.8px;width:384.0px;height:285.0px;background:#fff;border-top:1px solid #b4b4b4;border-left:1px solid #b4b4b4;border-right:1px solid #dcdcdc;border-bottom:1px solid #dcdcdc"></div>
<div class="a" style="left:24.5px;top:157.3px;width:382.5px;height:24.0px;background:#d8d3da"></div>
<svg class="a" style="left:29.5px;top:115.0px;" width="12" height="12" viewBox="0 0 12 12"><circle cx="6" cy="6" r="5.3" fill="#fff" stroke="#1a1a1a" stroke-width="1.2"/></svg>
<div class="t" style="left:49.3px;top:114.9px;font-size:12.5px;line-height:15.0px;color:#2e2e2e;letter-spacing:0.55px;font-weight:normal;font-style:normal;">Konqueror</div>
<svg class="a" style="left:29.5px;top:139.0px;" width="12" height="12" viewBox="0 0 12 12"><circle cx="6" cy="6" r="5.3" fill="#fff" stroke="#1a1a1a" stroke-width="1.2"/></svg>
<div class="t" style="left:49.3px;top:138.9px;font-size:12.5px;line-height:15.0px;color:#2e2e2e;letter-spacing:0.55px;font-weight:normal;font-style:normal;">Screem HTML/XML Editor</div>
<svg class="a" style="left:29.5px;top:163.0px;" width="12" height="12" viewBox="0 0 12 12"><circle cx="6" cy="6" r="5.3" fill="#fff" stroke="#1a1a1a" stroke-width="1.2"/><circle cx="6" cy="6" r="2.8" fill="#111"/></svg>
<div class="t" style="left:49.3px;top:162.9px;font-size:12.5px;line-height:15.0px;color:#3a3a58;letter-spacing:0.55px;font-weight:normal;font-style:normal;">epiphany</div>
<svg class="a" style="left:29.5px;top:187.0px;" width="12" height="12" viewBox="0 0 12 12"><circle cx="6" cy="6" r="5.3" fill="#fff" stroke="#1a1a1a" stroke-width="1.2"/></svg>
<div class="t" style="left:49.3px;top:186.9px;font-size:12.5px;line-height:15.0px;color:#2e2e2e;letter-spacing:0.55px;font-weight:normal;font-style:normal;">opera</div>
<svg class="a" style="left:29.5px;top:211.0px;" width="12" height="12" viewBox="0 0 12 12"><circle cx="6" cy="6" r="5.3" fill="#fff" stroke="#1a1a1a" stroke-width="1.2"/></svg>
<div class="t" style="left:49.3px;top:210.9px;font-size:12.5px;line-height:15.0px;color:#2e2e2e;letter-spacing:0.55px;font-weight:normal;font-style:normal;">firefox</div>
<svg class="a" style="left:29.5px;top:235.0px;" width="12" height="12" viewBox="0 0 12 12"><circle cx="6" cy="6" r="5.3" fill="#fff" stroke="#1a1a1a" stroke-width="1.2"/></svg>
<div class="t" style="left:49.3px;top:234.9px;font-size:12.5px;line-height:15.0px;color:#2e2e2e;letter-spacing:0.55px;font-weight:normal;font-style:normal;">Text Editor</div>
<div class="a" style="left:233.5px;top:405.5px;width:84.0px;height:29.0px;border:1px solid #c8c8c8;border-radius:3px;background:linear-gradient(#fdfdfd,#e4e4e4);box-shadow:0 1px 0 #b0b0b0"></div>
<svg class="a" style="left:244.0px;top:410.0px;" width="19" height="19" viewBox="0 0 19 19"><circle cx="9.5" cy="9.5" r="8.3" fill="#e8a818" stroke="#141414" stroke-width="2"/><circle cx="9.5" cy="8" r="5" fill="#f6c84a" opacity=".6"/><path d="M9.5 5 V14 M5 9.5 H14" stroke="#fff" stroke-width="2.2"/></svg>
<div class="t" style="left:266.3px;top:414.4px;font-size:12.5px;line-height:15.0px;color:#2e2e2e;letter-spacing:0.55px;font-weight:normal;font-style:normal;"><span class="u">D</span>odaj</div>
<div class="a" style="left:324.2px;top:405.5px;width:84.0px;height:29.0px;border:1px solid #c8c8c8;border-radius:3px;background:linear-gradient(#fdfdfd,#e4e4e4);box-shadow:0 1px 0 #b0b0b0"></div>
<svg class="a" style="left:340.5px;top:410.0px;" width="19" height="19" viewBox="0 0 19 19"><circle cx="9.5" cy="9.5" r="8.3" fill="#e8a818" stroke="#141414" stroke-width="2"/><circle cx="9.5" cy="8" r="5" fill="#f6c84a" opacity=".6"/><path d="M5 9.5 H14" stroke="#fff" stroke-width="2.2"/></svg>
<div class="t" style="left:361.9px;top:414.4px;font-size:12.5px;line-height:15.0px;color:#2e2e2e;letter-spacing:0.55px;font-weight:normal;font-style:normal;"><span class="u">U</span>suń</div>
<div class="a" style="left:15.0px;top:455.0px;width:84.0px;height:30.0px;border:1px solid #c8c8c8;border-radius:3px;background:linear-gradient(#fdfdfd,#e4e4e4);box-shadow:0 1px 0 #b0b0b0"></div>
<div class="t" style="left:37.0px;top:464.2px;font-size:12.5px;line-height:15.0px;color:#2e2e2e;letter-spacing:0.55px;font-weight:normal;font-style:normal;"></div>
<div class="a" style="left:331.3px;top:455.2px;width:87.0px;height:29.0px;border:1px solid #c8c8c8;border-radius:3px;background:linear-gradient(#fdfdfd,#e4e4e4);box-shadow:0 1px 0 #b0b0b0"></div>
<svg class="a" style="left:341.0px;top:461.0px;" width="18" height="18" viewBox="0 0 18 18"><path d="M3 3 L15 15 M15 3 L3 15" stroke="#181818" stroke-width="6.5" stroke-linecap="round"/><path d="M3 3 L15 15 M15 3 L3 15" stroke="#f4b41a" stroke-width="4" stroke-linecap="round"/></svg>
<div class="t" style="left:361.9px;top:464.7px;font-size:12.5px;line-height:15.0px;color:#2e2e2e;letter-spacing:0.55px;font-weight:normal;font-style:normal;">Za<span class="u">m</span>knij</div>
<div class="a" style="left:425.0px;top:24.0px;width:8.0px;height:478.0px;background:linear-gradient(90deg,#e9e9e9,#d4d4d4 80%,#c4c4c4)"></div>
</div>
<div class="win" style="left:404px;top:776px;width:376px;height:183px">
<div class="tbar" style="height:26px"></div>
<div class="a" style="left:0.0px;top:24.0px;width:8.0px;height:159.0px;background:linear-gradient(90deg,#fafafa,#e9e9e9)"></div>
<div class="a" style="left:13.5px;top:10.0px;width:10.5px;height:1.6px;background:#222"></div>
<div class="a" style="left:13.5px;top:13.5px;width:10.5px;height:1.6px;background:#222"></div>
<svg class="a" style="left:122.0px;top:4.0px;" width="15" height="14" viewBox="0 0 15 14"><ellipse cx="7" cy="7" rx="6.5" ry="5.5" fill="#d8884a" transform="rotate(30 7 7)"/><ellipse cx="6" cy="6" rx="3" ry="2" fill="#f4c090"/><path d="M3 9 Q7 12 12 8" stroke="#8a4a20" fill="none"/></svg>
<div class="t" style="left:144.0px;top:5.7px;font-size:12.5px;line-height:15.0px;color:#2a2a2a;letter-spacing:0.75px;font-weight:normal;font-style:normal;">Add Application</div>
<svg class="a" style="left:352.0px;top:7.0px;" width="11" height="10" viewBox="0 0 11 10"><path d="M1 1 L10 9 M10 1 L1 9" stroke="#1c1c1c" stroke-width="1.8"/></svg>
<svg class="a" style="left:26.0px;top:42.0px;" width="42" height="44" viewBox="0 0 42 44"><polygon points="21.5,11.0 21.4,12.3 19.3,12.8 18.9,13.6 19.6,15.6 18.6,16.4 16.8,15.3 15.9,15.6 15.0,17.5 13.7,17.4 13.2,15.3 12.4,14.9 10.4,15.6 9.6,14.6 10.7,12.8 10.4,11.9 8.5,11.0 8.6,9.7 10.7,9.2 11.1,8.4 10.4,6.4 11.4,5.6 13.2,6.7 14.1,6.4 15.0,4.5 16.3,4.6 16.8,6.7 17.6,7.1 19.6,6.4 20.4,7.4 19.3,9.2 19.6,10.1" fill="#a8a8a8" stroke="#2a2a2a" stroke-width="1.2"/><circle cx="15" cy="11" r="2.3" fill="#333"/><polygon points="14.0,33.0 13.9,34.2 12.0,34.7 11.6,35.4 12.2,37.2 11.3,38.0 9.7,37.0 8.8,37.2 8.0,39.0 6.8,38.9 6.3,37.0 5.6,36.6 3.8,37.2 3.0,36.3 4.0,34.7 3.8,33.8 2.0,33.0 2.1,31.8 4.0,31.3 4.4,30.6 3.8,28.8 4.7,28.0 6.3,29.0 7.2,28.8 8.0,27.0 9.2,27.1 9.7,29.0 10.4,29.4 12.2,28.8 13.0,29.7 12.0,31.3 12.2,32.2" fill="#a0a0a0" stroke="#2a2a2a" stroke-width="1.2"/><circle cx="8" cy="33" r="2.1" fill="#333"/><polygon points="35.0,26.0 34.8,28.1 31.3,29.0 30.6,30.4 31.8,33.8 30.1,35.1 27.0,33.3 25.5,33.8 24.0,37.0 21.9,36.8 21.0,33.3 19.6,32.6 16.2,33.8 14.9,32.1 16.7,29.0 16.2,27.5 13.0,26.0 13.2,23.9 16.7,23.0 17.4,21.6 16.2,18.2 17.9,16.9 21.0,18.7 22.5,18.2 24.0,15.0 26.1,15.2 27.0,18.7 28.4,19.4 31.8,18.2 33.1,19.9 31.3,23.0 31.8,24.5" fill="#c8c4b4" stroke="#2a2a2a" stroke-width="1.2"/><circle cx="24" cy="26" r="3.8" fill="#333"/></svg>
<div class="t" style="left:84.0px;top:41.2px;font-size:12.5px;line-height:15.0px;color:#2e2e2e;letter-spacing:0.6px;font-weight:normal;font-style:normal;">Open <i>netart.eu.org</i> and other files of type</div>
<div class="t" style="left:84.0px;top:58.8px;font-size:12.5px;line-height:15.0px;color:#2e2e2e;letter-spacing:0.6px;font-weight:normal;font-style:normal;">"HTML document" with:</div>
<div class="a" style="left:83.3px;top:81.3px;width:197.0px;height:24.7px;background:#fff;border:1px solid #c4c4c4;border-top-color:#a8a8a8"></div>
<div class="t" style="left:86.0px;top:87.7px;font-size:12.5px;line-height:15.0px;color:#2e2e2e;letter-spacing:0.2px;font-weight:normal;font-style:normal;">scr</div>
<div class="a" style="left:104.5px;top:86.0px;width:1.2px;height:16.0px;background:#000"></div>
<div class="a" style="left:287.3px;top:80.0px;width:65.0px;height:27.4px;border:1px solid #c8c8c8;border-radius:3px;background:linear-gradient(#fdfdfd,#e4e4e4);box-shadow:0 1px 0 #b0b0b0"></div>
<div class="t" style="left:292.5px;top:88.7px;font-size:12.5px;line-height:15.0px;color:#2e2e2e;letter-spacing:0.45px;font-weight:normal;font-style:normal;"><span class="u">B</span>rowse...</div>
<div class="a" style="left:174.3px;top:131.0px;width:84.3px;height:31.0px;border:1px solid #c8c8c8;border-radius:3px;background:linear-gradient(#fdfdfd,#e4e4e4);box-shadow:0 1px 0 #b0b0b0"></div>
<svg class="a" style="left:185.0px;top:137.0px;" width="19" height="19" viewBox="0 0 19 19"><circle cx="9.5" cy="9.5" r="8.3" fill="#e8a818" stroke="#141414" stroke-width="2"/><circle cx="9.5" cy="8" r="5" fill="#f6c84a" opacity=".6"/><path d="M6 6 L13 13 M13 6 L6 13" stroke="#f4ecd8" stroke-width="2.6"/></svg>
<div class="t" style="left:207.3px;top:141.4px;font-size:12.5px;line-height:15.0px;color:#2e2e2e;letter-spacing:0.55px;font-weight:normal;font-style:normal;"><span class="u">A</span>nuluj</div>
<div class="a" style="left:270.2px;top:132.3px;width:82.4px;height:29.0px;border:1px solid #c8c8c8;border-radius:3px;background:linear-gradient(#fdfdfd,#e4e4e4);box-shadow:0 1px 0 #b0b0b0"></div>
<svg class="a" style="left:286.5px;top:137.0px;" width="19" height="19" viewBox="0 0 19 19"><circle cx="9.5" cy="9.5" r="8.3" fill="#e8a818" stroke="#141414" stroke-width="2"/><circle cx="9.5" cy="8" r="5" fill="#f6c84a" opacity=".6"/><path d="M9.5 5 V14 M5 9.5 H14" stroke="#fff" stroke-width="2.2"/></svg>
<div class="t" style="left:308.0px;top:141.4px;font-size:12.5px;line-height:15.0px;color:#2e2e2e;letter-spacing:0.55px;font-weight:normal;font-style:normal;"><span class="u">A</span>dd</div>
<div class="a" style="left:367.0px;top:24.0px;width:8.0px;height:159.0px;background:linear-gradient(90deg,#e9e9e9,#d4d4d4 80%,#c4c4c4)"></div>
</div>
</body></html>
